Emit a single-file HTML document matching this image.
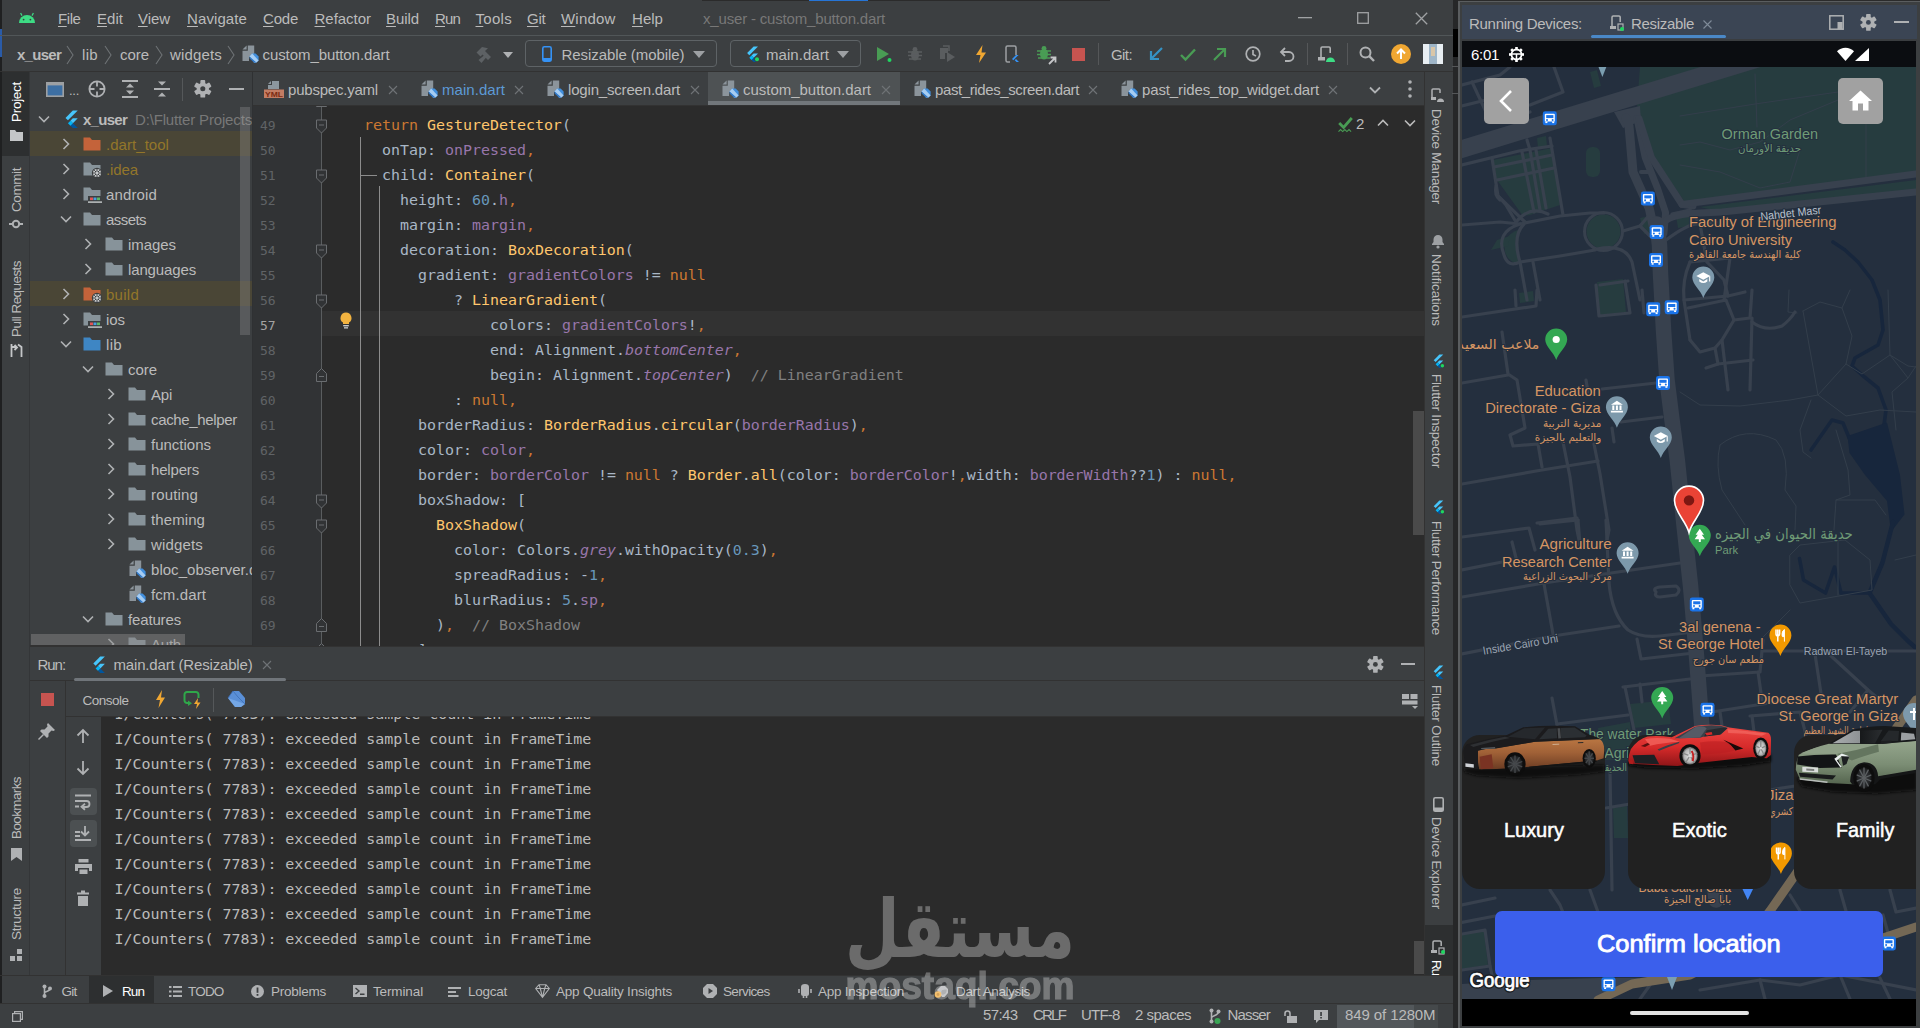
<!DOCTYPE html>
<html><head><meta charset="utf-8"><title>x_user - custom_button.dart</title>
<style>
*{box-sizing:border-box;margin:0;padding:0}
html,body{width:1920px;height:1028px;overflow:hidden;background:#3c3f41}
body{position:relative;font-family:"Liberation Sans","DejaVu Sans",sans-serif;font-size:15px;color:#bbbbbb;-webkit-font-smoothing:antialiased}
.a{position:absolute}
.t{position:absolute;white-space:nowrap;line-height:20px;height:20px}
.mono{font-family:"DejaVu Sans Mono","Liberation Mono",monospace;font-size:14.95px;white-space:pre}
.v{position:absolute;white-space:nowrap;transform-origin:0 0;line-height:16px;font-size:13.5px}
svg{position:absolute;overflow:visible}
.k{color:#cc7832}.f{color:#ffc66d}.p{color:#9876aa}.n{color:#6897bb}.c{color:#808080}.i{font-style:italic;color:#9876aa}
u{text-decoration:underline;text-underline-offset:2px;text-decoration-thickness:1px}
</style></head><body>
<div class="a" style="left:0px;top:0px;width:1920px;height:1028px;background:#3c3f41;"></div>
<div class="a" style="left:0px;top:0px;width:2px;height:1028px;background:#1f2021;"></div>
<div class="a" style="left:0px;top:29px;width:2px;height:28px;background:#2a5ba8;"></div>
<div class="a" style="left:0px;top:35px;width:1453px;height:1px;background:#515658;"></div>
<div class="a" style="left:0px;top:71px;width:1453px;height:1px;background:#323232;"></div>
<div class="a" style="left:702px;top:0px;width:408px;height:1px;background:#2b2b2b;"></div>
<div class="a" style="left:809px;top:0px;width:59px;height:1px;background:#2675d7;"></div>
<svg style="left:18.0px;top:12.0px" width="18" height="12" viewBox="0 0 18 12"><path d="M1 11 A8 8 0 0 1 17 11 Z" fill="#3ddc84"/><path d="M4 3.6 L2.6 1 M14 3.6 L15.4 1" stroke="#3ddc84" stroke-width="1.2"/><circle cx="5.6" cy="7.6" r=".9" fill="#3c3f41"/><circle cx="12.4" cy="7.6" r=".9" fill="#3c3f41"/></svg>
<span class="t" style="left:58px;top:8.7px;font-size:15px;letter-spacing:-0.418px;color:#bbbbbb;"><u>F</u>ile</span>
<span class="t" style="left:97px;top:8.7px;font-size:15px;letter-spacing:0.038px;color:#bbbbbb;"><u>E</u>dit</span>
<span class="t" style="left:138px;top:8.7px;font-size:15px;letter-spacing:-0.061px;color:#bbbbbb;"><u>V</u>iew</span>
<span class="t" style="left:187px;top:8.7px;font-size:15px;letter-spacing:0.100px;color:#bbbbbb;"><u>N</u>avigate</span>
<span class="t" style="left:263px;top:8.7px;font-size:15px;letter-spacing:-0.215px;color:#bbbbbb;"><u>C</u>ode</span>
<span class="t" style="left:314.5px;top:8.7px;font-size:15px;letter-spacing:-0.024px;color:#bbbbbb;"><u>R</u>efactor</span>
<span class="t" style="left:386px;top:8.7px;font-size:15px;letter-spacing:-0.071px;color:#bbbbbb;"><u>B</u>uild</span>
<span class="t" style="left:435px;top:8.7px;font-size:15px;letter-spacing:-0.839px;color:#bbbbbb;"><u>R</u>un</span>
<span class="t" style="left:475.5px;top:8.7px;font-size:15px;letter-spacing:0.296px;color:#bbbbbb;"><u>T</u>ools</span>
<span class="t" style="left:527px;top:8.7px;font-size:15px;letter-spacing:-0.222px;color:#bbbbbb;"><u>G</u>it</span>
<span class="t" style="left:561px;top:8.7px;font-size:15px;letter-spacing:0.192px;color:#bbbbbb;"><u>W</u>indow</span>
<span class="t" style="left:632px;top:8.7px;font-size:15px;letter-spacing:0.037px;color:#bbbbbb;"><u>H</u>elp</span>
<span class="t" style="left:703px;top:8.7px;font-size:15px;letter-spacing:-0.176px;color:#787878;">x_user - custom_button.dart</span>
<svg style="left:1298.0px;top:17.0px" width="14" height="2" viewBox="0 0 14 2"><rect width="14" height="1.3" fill="#a0a2a4"/></svg>
<svg style="left:1357.0px;top:12.0px" width="12" height="12" viewBox="0 0 12 12"><rect x=".7" y=".7" width="10.6" height="10.6" fill="none" stroke="#a0a2a4" stroke-width="1.3"/></svg>
<svg style="left:1414.5px;top:11.5px" width="13" height="13" viewBox="0 0 13 13"><path d="M.8 .8 L12.2 12.2 M12.2 .8 L.8 12.2" stroke="#a0a2a4" stroke-width="1.3"/></svg>
<span class="t" style="left:17px;top:44.7px;font-size:15px;letter-spacing:-0.728px;color:#bbbbbb;font-weight:bold;">x_user</span>
<span class="t" style="left:82px;top:44.7px;font-size:15px;letter-spacing:0.331px;color:#bbbbbb;">lib</span>
<span class="t" style="left:120px;top:44.7px;font-size:15px;letter-spacing:-0.045px;color:#bbbbbb;">core</span>
<span class="t" style="left:170px;top:44.7px;font-size:15px;letter-spacing:0.163px;color:#bbbbbb;">widgets</span>
<span class="t" style="left:262.5px;top:44.7px;font-size:15px;letter-spacing:-0.078px;color:#bbbbbb;">custom_button.dart</span>
<svg style="left:66.0px;top:44.5px" width="8" height="20" viewBox="0 0 8 20"><path d="M1 1 L7 10 L1 19" stroke="#6e7275" stroke-width="1.1" fill="none"/></svg>
<svg style="left:104.0px;top:44.5px" width="8" height="20" viewBox="0 0 8 20"><path d="M1 1 L7 10 L1 19" stroke="#6e7275" stroke-width="1.1" fill="none"/></svg>
<svg style="left:155.0px;top:44.5px" width="8" height="20" viewBox="0 0 8 20"><path d="M1 1 L7 10 L1 19" stroke="#6e7275" stroke-width="1.1" fill="none"/></svg>
<svg style="left:226.5px;top:44.5px" width="8" height="20" viewBox="0 0 8 20"><path d="M1 1 L7 10 L1 19" stroke="#6e7275" stroke-width="1.1" fill="none"/></svg>
<svg style="left:241.0px;top:45.0px" width="18" height="18" viewBox="0 0 18 18"><path d="M6.8 0.5 H13.2 V9 L8 12.5 V16 H1.5 V5.8 H6.8 Z" fill="#8b949b"/><path d="M5.6 0.5 L1.5 4.6 H5.6 Z" fill="#8b949b"/><path d="M8.6 11.4 L11.2 8.6 H14.6 L17.6 11.6 V15.4 L15.4 17.6 H13 Z" fill="#418fde"/><path d="M8.6 11.4 L11.2 8.6 L17.6 15.4 L15.4 17.6 H13 Z" fill="#a6cdf3"/><path d="M8.6 11.4 L15.4 17.6 H13 L8.6 13.6 Z" fill="#2f78c8"/></svg>
<svg style="left:474.5px;top:44.5px" width="19" height="19" viewBox="0 0 19 19"><path d="M3.5 15 L6.5 18 L11.5 12 L9.5 10 Z" fill="#5d6164"/><path d="M1.5 7.5 L7 2 L13 3.2 L10 6 L16 12 L13 15 L7.5 9.5 L5.5 11.5 Z" fill="#5d6164"/></svg>
<svg style="left:503.0px;top:52.0px" width="10" height="6" viewBox="0 0 10 6"><path d="M0 0 H10 L5 6 Z" fill="#afb1b3"/></svg>
<div class="a" style="left:525px;top:40px;width:192px;height:27px;border:1px solid #5e6366;border-radius:4px;"></div>
<svg style="left:541.5px;top:46.0px" width="10" height="16" viewBox="0 0 10 16"><rect x=".8" y=".8" width="8.4" height="14.4" rx="1.6" fill="none" stroke="#3592f5" stroke-width="1.6"/><rect x=".8" y="12" width="8.4" height="3.2" fill="#3592f5"/></svg>
<span class="t" style="left:561.5px;top:44.7px;font-size:15px;letter-spacing:-0.068px;color:#bbbbbb;">Resizable (mobile)</span>
<svg style="left:693.0px;top:50.5px" width="12" height="7" viewBox="0 0 12 7"><path d="M0 0 H12 L6 7 Z" fill="#9da0a3"/></svg>
<div class="a" style="left:730px;top:40px;width:131px;height:27px;border:1px solid #5e6366;border-radius:4px;"></div>
<svg style="left:744.0px;top:46.0px" width="16" height="16" viewBox="0 0 16 16"><path d="M9.6 0.5 H14 L5.3 9.2 L3.1 7 Z" fill="#47c5fb"/><path d="M9.6 7.4 H14 L9.7 11.7 L7.5 9.5 Z" fill="#47c5fb"/><path d="M7.5 13.9 L9.6 16 H14 L9.7 11.7 Z" fill="#00569e"/><path d="M5.3 11.7 L7.5 9.5 L9.7 11.7 L7.5 13.9 Z" fill="#00b5f8"/><circle cx="13" cy="13.3" r="2.6" fill="#3c3f41"/><circle cx="13" cy="13.3" r="2" fill="#1fd660"/></svg>
<span class="t" style="left:766px;top:44.7px;font-size:15px;letter-spacing:0.052px;color:#bbbbbb;">main.dart</span>
<svg style="left:837.0px;top:50.5px" width="12" height="7" viewBox="0 0 12 7"><path d="M0 0 H12 L6 7 Z" fill="#9da0a3"/></svg>
<svg style="left:876.0px;top:46.0px" width="16" height="16" viewBox="0 0 16 16"><path d="M1 1 L13 8 L1 15 Z" fill="#499c54"/><circle cx="13.5" cy="14" r="2" fill="#1fd660"/></svg>
<svg style="left:907.0px;top:46.0px" width="16" height="16" viewBox="0 0 16 16"><ellipse cx="8" cy="9" rx="4" ry="5.5" fill="#5a5d5f"/><circle cx="8" cy="3.3" r="2.4" fill="#5a5d5f"/><path d="M1 6 H15 M1 9.5 H15 M2 13 H14" stroke="#5a5d5f" stroke-width="1.4"/></svg>
<svg style="left:939.0px;top:46.0px" width="18" height="16" viewBox="0 0 18 16"><path d="M1 2 H9 V7 L6 7 V13 H1 Z" fill="#5a5d5f"/><path d="M8 6 L16 11 L8 16 Z" fill="#5a5d5f"/><path d="M4 0 H10 V5" fill="none" stroke="#5a5d5f" stroke-width="1.5"/></svg>
<svg style="left:975.0px;top:45.0px" width="12" height="18" viewBox="0 0 12 18"><path d="M7.5 0 L1 10 H5.5 L4 18 L11 7.5 H6.5 Z" fill="#f0a732"/></svg>
<svg style="left:1003.5px;top:45.0px" width="16" height="18" viewBox="0 0 16 18"><path d="M12 10 V2.5 A1.5 1.5 0 0 0 10.5 1 H3.5 A1.5 1.5 0 0 0 2 2.5 V15.5 A1.5 1.5 0 0 0 3.5 17 H6" fill="none" stroke="#9da0a3" stroke-width="1.5"/><path d="M12 10 L8 14 L9.3 15.3 L14.6 10 Z M12 14 L10.7 15.3 L12.5 17.1 H15 Z" fill="#3592f5"/></svg>
<svg style="left:1036.0px;top:45.0px" width="16" height="16" viewBox="0 0 16 16"><ellipse cx="8" cy="9" rx="4" ry="5.5" fill="#499c54"/><circle cx="8" cy="3.3" r="2.4" fill="#499c54"/><path d="M1 6 H15 M1 9.5 H15 M2 13 H14" stroke="#499c54" stroke-width="1.4"/></svg>
<svg style="left:1047.5px;top:55.5px" width="9" height="9" viewBox="0 0 9 9"><path d="M1 8 L7 2 M2.5 1.5 H7.5 V6.5" stroke="#c4c6c8" stroke-width="1.8" fill="none"/></svg>
<div class="a" style="left:1071.5px;top:47.5px;width:13px;height:13px;background:#c75450;"></div>
<div class="a" style="left:1098px;top:43px;width:1px;height:22px;background:#555759;"></div>
<span class="t" style="left:1111px;top:44.7px;font-size:15px;letter-spacing:-0.584px;color:#bbbbbb;">Git:</span>
<svg style="left:1148.5px;top:47.0px" width="14" height="14" viewBox="0 0 14 14"><path d="M13 1 L2 12 M2 4 V12 H10" stroke="#3592c4" stroke-width="2.2" fill="none"/></svg>
<svg style="left:1180.0px;top:47.5px" width="16" height="13" viewBox="0 0 16 13"><path d="M1 7 L5.5 11.5 L15 1.5" stroke="#499c54" stroke-width="2.4" fill="none"/></svg>
<svg style="left:1213.0px;top:47.0px" width="14" height="14" viewBox="0 0 14 14"><path d="M1 13 L12 2 M4 2 H12 V10" stroke="#499c54" stroke-width="2.2" fill="none"/></svg>
<svg style="left:1245.0px;top:46.0px" width="16" height="16" viewBox="0 0 16 16"><circle cx="8" cy="8" r="6.8" fill="none" stroke="#afb1b3" stroke-width="1.7"/><path d="M8 4 V8.5 L11 10" stroke="#afb1b3" stroke-width="1.7" fill="none"/></svg>
<svg style="left:1278.5px;top:46.5px" width="16" height="15" viewBox="0 0 16 15"><path d="M2 5 H10 A4.5 4.5 0 0 1 10 14 H6" stroke="#afb1b3" stroke-width="1.8" fill="none"/><path d="M6 1 L2 5 L6 9" stroke="#afb1b3" stroke-width="1.8" fill="none"/></svg>
<div class="a" style="left:1307px;top:43px;width:1px;height:22px;background:#555759;"></div>
<svg style="left:1318.0px;top:46.0px" width="18" height="16" viewBox="0 0 18 16"><path d="M3 11 V2.2 A1.2 1.2 0 0 1 4.2 1 H11 A1.2 1.2 0 0 1 12.2 2.2 V7" fill="none" stroke="#afb1b3" stroke-width="1.6"/><rect x="0" y="11" width="7" height="3.5" fill="#afb1b3"/><path d="M8 16 A4.5 4.5 0 0 1 17 16 Z" fill="#3ddc84"/></svg>
<div class="a" style="left:1347px;top:43px;width:1px;height:22px;background:#555759;"></div>
<svg style="left:1359.0px;top:46.0px" width="16" height="16" viewBox="0 0 16 16"><circle cx="6.5" cy="6.5" r="5" fill="none" stroke="#afb1b3" stroke-width="2"/><path d="M10.2 10.2 L15 15" stroke="#afb1b3" stroke-width="2.4"/></svg>
<svg style="left:1391.0px;top:44.0px" width="20" height="20" viewBox="0 0 20 20"><circle cx="10" cy="10" r="10" fill="#f0a732"/><path d="M10 15 V6 M6 9.5 L10 5.5 L14 9.5" stroke="#fff" stroke-width="2" fill="none"/></svg>
<div class="a" style="left:1423px;top:44px;width:20px;height:20px;background:#e8eef2;"></div>
<div class="a" style="left:1429px;top:44px;width:8px;height:20px;background:#9fb6c8;"></div>
<div class="a" style="left:1431px;top:47px;width:4px;height:9px;background:#d9c6a8;"></div>
<div class="a" style="left:2px;top:72px;width:27px;height:931px;background:#3c3f41;"></div>
<div class="a" style="left:2px;top:72px;width:27px;height:84px;background:#2d2f30;"></div>
<div class="a" style="left:29px;top:72px;width:1px;height:931px;background:#343638;"></div>
<span class="v" style="left:9px;top:122.0px;transform:rotate(-90deg);font-size:13.5px;letter-spacing:-0.288px;color:#ffffff">Project</span>
<svg style="left:9.5px;top:129.5px" width="13" height="11" viewBox="0 0 13 11"><path d="M0 0 H5 L6.5 2 H13 V11 H0 Z" fill="#c4c6c8"/></svg>
<span class="v" style="left:9px;top:212.0px;transform:rotate(-90deg);font-size:13.5px;letter-spacing:-0.417px;color:#bbbbbb">Commit</span>
<svg style="left:9.0px;top:219.0px" width="14" height="10" viewBox="0 0 14 10"><circle cx="7" cy="5" r="3.2" fill="none" stroke="#afb1b3" stroke-width="2"/><path d="M0 5 H3.5 M10.5 5 H14" stroke="#afb1b3" stroke-width="2"/></svg>
<span class="v" style="left:9px;top:337.0px;transform:rotate(-90deg);font-size:13.5px;letter-spacing:-0.561px;color:#bbbbbb">Pull Requests</span>
<svg style="left:9.5px;top:343.5px" width="13" height="13" viewBox="0 0 13 13"><path d="M1.5 0 V13 M1.5 3 L6.5 3 M4.5 1 L7 3.5 L4.5 6 M11.5 13 V3 L8 0.5" stroke="#c4c6c8" stroke-width="1.8" fill="none"/></svg>
<span class="v" style="left:9px;top:839.0px;transform:rotate(-90deg);font-size:13.5px;letter-spacing:-0.614px;color:#bbbbbb">Bookmarks</span>
<svg style="left:10.5px;top:847.5px" width="11" height="13" viewBox="0 0 11 13"><path d="M0 0 H11 V13 L5.5 9 L0 13 Z" fill="#afb1b3"/></svg>
<span class="v" style="left:9px;top:940.0px;transform:rotate(-90deg);font-size:13.5px;letter-spacing:-0.308px;color:#bbbbbb">Structure</span>
<svg style="left:9.5px;top:949.0px" width="13" height="12" viewBox="0 0 13 12"><rect x="7" y="0" width="5" height="5" fill="#afb1b3"/><rect x="0" y="7" width="5" height="5" fill="#afb1b3"/><rect x="7" y="7" width="5" height="5" fill="#afb1b3"/></svg>
<div class="a" style="left:1424px;top:72px;width:1px;height:931px;background:#323232;"></div>
<div class="a" style="left:1425px;top:72px;width:28px;height:931px;background:#3c3f41;"></div>
<svg style="left:1430.5px;top:88.0px" width="13" height="14" viewBox="0 0 13 14"><path d="M1 9 V2 A1 1 0 0 1 2 1 H8 A1 1 0 0 1 9 2 V5" fill="none" stroke="#afb1b3" stroke-width="1.5"/><rect x="0" y="9" width="5" height="3" fill="#afb1b3"/><path d="M6 14 A3.5 3.5 0 0 1 13 14 Z" fill="#afb1b3"/></svg>
<span class="v" style="left:1444px;top:109px;transform:rotate(90deg);font-size:13.5px;letter-spacing:-0.236px;color:#bbbbbb">Device Manager</span>
<svg style="left:1431.0px;top:233.5px" width="14" height="15" viewBox="0 0 14 15"><path d="M1 11 H13 V10 L11.5 8 V5.5 A4.5 4.5 0 0 0 2.5 5.5 V8 L1 10 Z" fill="#9da0a3"/><circle cx="7" cy="13" r="1.6" fill="#9da0a3"/></svg>
<span class="v" style="left:1444px;top:254px;transform:rotate(90deg);font-size:13.5px;letter-spacing:-0.118px;color:#bbbbbb">Notifications</span>
<svg style="left:1431.0px;top:354.0px" width="14" height="14" viewBox="0 0 16 16"><path d="M9.6 0.5 H14 L5.3 9.2 L3.1 7 Z" fill="#47c5fb"/><path d="M9.6 7.4 H14 L9.7 11.7 L7.5 9.5 Z" fill="#47c5fb"/><path d="M7.5 13.9 L9.6 16 H14 L9.7 11.7 Z" fill="#00569e"/><path d="M5.3 11.7 L7.5 9.5 L9.7 11.7 L7.5 13.9 Z" fill="#00b5f8"/><circle cx="13" cy="13.3" r="2.6" fill="#3c3f41"/><circle cx="13" cy="13.3" r="2" fill="#1fd660"/></svg>
<span class="v" style="left:1444px;top:374px;transform:rotate(90deg);font-size:13.5px;letter-spacing:-0.208px;color:#bbbbbb">Flutter Inspector</span>
<svg style="left:1431.0px;top:500.0px" width="14" height="14" viewBox="0 0 16 16"><path d="M9.6 0.5 H14 L5.3 9.2 L3.1 7 Z" fill="#47c5fb"/><path d="M9.6 7.4 H14 L9.7 11.7 L7.5 9.5 Z" fill="#47c5fb"/><path d="M7.5 13.9 L9.6 16 H14 L9.7 11.7 Z" fill="#00569e"/><path d="M5.3 11.7 L7.5 9.5 L9.7 11.7 L7.5 13.9 Z" fill="#00b5f8"/><circle cx="13" cy="13.3" r="2.6" fill="#3c3f41"/><circle cx="13" cy="13.3" r="2" fill="#1fd660"/></svg>
<span class="v" style="left:1444px;top:521px;transform:rotate(90deg);font-size:13.5px;letter-spacing:-0.279px;color:#bbbbbb">Flutter Performance</span>
<svg style="left:1431.0px;top:665.0px" width="14" height="14" viewBox="0 0 16 16"><path d="M9.6 0.5 H14 L5.3 9.2 L3.1 7 Z" fill="#47c5fb"/><path d="M9.6 7.4 H14 L9.7 11.7 L7.5 9.5 Z" fill="#47c5fb"/><path d="M7.5 13.9 L9.6 16 H14 L9.7 11.7 Z" fill="#00569e"/><path d="M5.3 11.7 L7.5 9.5 L9.7 11.7 L7.5 13.9 Z" fill="#00b5f8"/></svg>
<span class="v" style="left:1444px;top:685px;transform:rotate(90deg);font-size:13.5px;letter-spacing:-0.252px;color:#bbbbbb">Flutter Outline</span>
<svg style="left:1432.5px;top:796.5px" width="11" height="15" viewBox="0 0 11 15"><rect x=".8" y=".8" width="9.4" height="13.4" rx="1.5" fill="none" stroke="#afb1b3" stroke-width="1.6"/><rect x=".8" y="10.5" width="9.4" height="3.5" fill="#afb1b3"/></svg>
<span class="v" style="left:1444px;top:817px;transform:rotate(90deg);font-size:13.5px;letter-spacing:-0.219px;color:#bbbbbb">Device Explorer</span>
<div class="a" style="left:1425px;top:925px;width:28px;height:50px;background:#2d2f30;"></div>
<svg style="left:1431.0px;top:940.0px" width="14" height="14" viewBox="0 0 14 14"><path d="M2 10 V2.2 A1.2 1.2 0 0 1 3.2 1 H9 A1.2 1.2 0 0 1 10.2 2.2 V6" fill="none" stroke="#afb1b3" stroke-width="1.5"/><rect x="0" y="10" width="6" height="3" fill="#afb1b3"/><rect x="8" y="8" width="5" height="6" fill="none" stroke="#afb1b3" stroke-width="1.2"/><circle cx="12" cy="12" r="2" fill="#1fd660"/></svg>
<span class="v" style="left:1444px;top:960px;transform:rotate(90deg);font-size:13.5px;letter-spacing:-1.255px;color:#ffffff">Run</span>
<div class="a" style="left:1453px;top:0px;width:5px;height:1028px;background:#262728;"></div>
<div class="a" style="left:1453px;top:29px;width:5px;height:27.5px;background:#000000;"></div>
<div class="a" style="left:1452px;top:66px;width:6px;height:1px;background:#555759;"></div>
<div class="a" style="left:1452px;top:93px;width:6px;height:1px;background:#555759;"></div>
<div class="a" style="left:30px;top:72px;width:222px;height:574px;background:#3c3f41;"></div>
<div class="a" style="left:252px;top:72px;width:1px;height:574px;background:#2f3133;"></div>
<svg style="left:46.0px;top:81.5px" width="18" height="15" viewBox="0 0 18 15"><rect x=".8" y=".8" width="16.4" height="13.4" fill="#3d6fa3" stroke="#9da0a3" stroke-width="1.6"/><rect x="0" y="0" width="18" height="3.4" fill="#9da0a3"/></svg>
<span class="t" style="left:69px;top:81.0px;font-size:13px;letter-spacing:-0.278px;color:#bbbbbb;">...</span>
<svg style="left:88.0px;top:80.0px" width="18" height="18" viewBox="0 0 18 18"><circle cx="9" cy="9" r="7.6" fill="none" stroke="#afb1b3" stroke-width="1.8"/><path d="M9 1 V6.5 M9 11.5 V17 M1 9 H6.5 M11.5 9 H17" stroke="#afb1b3" stroke-width="1.8"/></svg>
<svg style="left:122.0px;top:80.0px" width="16" height="18" viewBox="0 0 16 18"><path d="M0 1 H16 M0 17 H16" stroke="#afb1b3" stroke-width="2"/><path d="M4 7.5 L8 3.5 L12 7.5 Z M4 10.5 L8 14.5 L12 10.5 Z" fill="#afb1b3"/></svg>
<svg style="left:154.0px;top:80.0px" width="16" height="18" viewBox="0 0 16 18"><path d="M0 9 H16" stroke="#afb1b3" stroke-width="2"/><path d="M4 1.5 L8 5.5 L12 1.5 Z M4 16.5 L8 12.5 L12 16.5 Z" fill="#afb1b3"/></svg>
<div class="a" style="left:182px;top:78px;width:1px;height:23px;background:#55585a;"></div>
<svg style="left:194.2px;top:80.2px" width="17.6" height="17.6" viewBox="0 0 16 16"><g transform="translate(8 8)"><rect x="-2.2" y="-8" width="4.4" height="5" rx="0.8" transform="rotate(0)" fill="#afb1b3"/><rect x="-2.2" y="-8" width="4.4" height="5" rx="0.8" transform="rotate(60)" fill="#afb1b3"/><rect x="-2.2" y="-8" width="4.4" height="5" rx="0.8" transform="rotate(120)" fill="#afb1b3"/><rect x="-2.2" y="-8" width="4.4" height="5" rx="0.8" transform="rotate(180)" fill="#afb1b3"/><rect x="-2.2" y="-8" width="4.4" height="5" rx="0.8" transform="rotate(240)" fill="#afb1b3"/><rect x="-2.2" y="-8" width="4.4" height="5" rx="0.8" transform="rotate(300)" fill="#afb1b3"/><circle r="5.6" fill="#afb1b3"/><circle r="2.3" fill="#3c3f41"/></g></svg>
<svg style="left:228.5px;top:88.0px" width="15" height="2" viewBox="0 0 15 2"><rect width="15" height="2" fill="#afb1b3"/></svg>
<div class="a" style="left:30px;top:106px;width:222px;height:540px;overflow:hidden">
<svg style="left:8.0px;top:9.0px" width="12" height="8" viewBox="0 0 12 8"><path d="M1 1.5 L6 6.5 L11 1.5" stroke="#afb1b3" stroke-width="1.6" fill="none"/></svg>
<svg style="left:32.0px;top:4.0px" width="18" height="18" viewBox="0 0 16 16"><path d="M9.6 0.5 H14 L5.3 9.2 L3.1 7 Z" fill="#47c5fb"/><path d="M9.6 7.4 H14 L9.7 11.7 L7.5 9.5 Z" fill="#47c5fb"/><path d="M7.5 13.9 L9.6 16 H14 L9.7 11.7 Z" fill="#00569e"/><path d="M5.3 11.7 L7.5 9.5 L9.7 11.7 L7.5 13.9 Z" fill="#00b5f8"/></svg>
<span class="t" style="left:53px;top:3.7px;font-size:15px;letter-spacing:-0.728px;color:#bbbbbb;font-weight:bold;">x_user</span>
<span class="t" style="left:105px;top:3.7px;font-size:15px;letter-spacing:-0.160px;color:#787878;">D:\Flutter Projects</span>
<div class="a" style="left:0px;top:25px;width:222px;height:25px;background:#4a4636;"></div>
<svg style="left:32.0px;top:32.0px" width="8" height="12" viewBox="0 0 8 12"><path d="M1.5 1 L6.5 6 L1.5 11" stroke="#afb1b3" stroke-width="1.6" fill="none"/></svg>
<svg style="left:53.0px;top:30.0px" width="18" height="16" viewBox="0 0 18 16"><path d="M0.5 1.5 H7 L9 4 H17.5 V14.5 H0.5 Z" fill="#c4633a"/></svg>
<span class="t" style="left:76px;top:28.7px;font-size:15px;letter-spacing:0.046px;color:#93762a;">.dart_tool</span>
<svg style="left:32.0px;top:57.0px" width="8" height="12" viewBox="0 0 8 12"><path d="M1.5 1 L6.5 6 L1.5 11" stroke="#afb1b3" stroke-width="1.6" fill="none"/></svg>
<svg style="left:53.0px;top:55.0px" width="18" height="16" viewBox="0 0 18 16"><path d="M0.5 1.5 H7 L9 4 H17.5 V14.5 H0.5 Z" fill="#87939a"/></svg>
<svg style="left:62.0px;top:62.0px" width="10" height="10" viewBox="0 0 10 10"><circle cx="5" cy="5" r="5.2" fill="#3c3f41"/><circle cx="5" cy="5" r="4" fill="#c9ccce"/><path d="M5 1 V9 M1 5 H9 M2.2 2.2 L7.8 7.8 M7.8 2.2 L2.2 7.8" stroke="#3c3f41" stroke-width="1"/><circle cx="5" cy="5" r="1.2" fill="#c9ccce"/></svg>
<span class="t" style="left:76px;top:53.7px;font-size:15px;letter-spacing:-0.106px;color:#93762a;">.idea</span>
<svg style="left:32.0px;top:82.0px" width="8" height="12" viewBox="0 0 8 12"><path d="M1.5 1 L6.5 6 L1.5 11" stroke="#afb1b3" stroke-width="1.6" fill="none"/></svg>
<svg style="left:53.0px;top:80.0px" width="18" height="16" viewBox="0 0 18 16"><path d="M0.5 1.5 H7 L9 4 H17.5 V14.5 H0.5 Z" fill="#87939a"/></svg>
<svg style="left:58.0px;top:89.5px" width="14" height="7" viewBox="0 0 14 7"><rect x="0" y="0" width="14" height="7" fill="#3c3f41"/><rect x="2" y="1.5" width="3" height="2.6" fill="#e05555"/><rect x="5.5" y="1.5" width="3" height="2.6" fill="#4a9fe0"/><rect x="9" y="1.5" width="3" height="2.6" fill="#5ab869"/><rect x="0" y="5.4" width="14" height="1.4" fill="#c9ccce"/></svg>
<span class="t" style="left:76px;top:78.7px;font-size:15px;letter-spacing:0.137px;color:#bbbbbb;">android</span>
<svg style="left:30.0px;top:109.0px" width="12" height="8" viewBox="0 0 12 8"><path d="M1 1.5 L6 6.5 L11 1.5" stroke="#afb1b3" stroke-width="1.6" fill="none"/></svg>
<svg style="left:53.0px;top:105.0px" width="18" height="16" viewBox="0 0 18 16"><path d="M0.5 1.5 H7 L9 4 H17.5 V14.5 H0.5 Z" fill="#87939a"/></svg>
<span class="t" style="left:76px;top:103.7px;font-size:15px;letter-spacing:-0.559px;color:#bbbbbb;">assets</span>
<svg style="left:54.0px;top:132.0px" width="8" height="12" viewBox="0 0 8 12"><path d="M1.5 1 L6.5 6 L1.5 11" stroke="#afb1b3" stroke-width="1.6" fill="none"/></svg>
<svg style="left:75.0px;top:130.0px" width="18" height="16" viewBox="0 0 18 16"><path d="M0.5 1.5 H7 L9 4 H17.5 V14.5 H0.5 Z" fill="#87939a"/></svg>
<span class="t" style="left:98px;top:128.7px;font-size:15px;letter-spacing:-0.059px;color:#bbbbbb;">images</span>
<svg style="left:54.0px;top:157.0px" width="8" height="12" viewBox="0 0 8 12"><path d="M1.5 1 L6.5 6 L1.5 11" stroke="#afb1b3" stroke-width="1.6" fill="none"/></svg>
<svg style="left:75.0px;top:155.0px" width="18" height="16" viewBox="0 0 18 16"><path d="M0.5 1.5 H7 L9 4 H17.5 V14.5 H0.5 Z" fill="#87939a"/></svg>
<span class="t" style="left:98px;top:153.7px;font-size:15px;letter-spacing:-0.137px;color:#bbbbbb;">languages</span>
<div class="a" style="left:0px;top:175px;width:222px;height:25px;background:#4a4636;"></div>
<svg style="left:32.0px;top:182.0px" width="8" height="12" viewBox="0 0 8 12"><path d="M1.5 1 L6.5 6 L1.5 11" stroke="#afb1b3" stroke-width="1.6" fill="none"/></svg>
<svg style="left:53.0px;top:180.0px" width="18" height="16" viewBox="0 0 18 16"><path d="M0.5 1.5 H7 L9 4 H17.5 V14.5 H0.5 Z" fill="#c4633a"/></svg>
<svg style="left:62.0px;top:187.0px" width="10" height="10" viewBox="0 0 10 10"><circle cx="5" cy="5" r="5.2" fill="#3c3f41"/><circle cx="5" cy="5" r="4" fill="#c9ccce"/><path d="M5 1 V9 M1 5 H9 M2.2 2.2 L7.8 7.8 M7.8 2.2 L2.2 7.8" stroke="#3c3f41" stroke-width="1"/><circle cx="5" cy="5" r="1.2" fill="#c9ccce"/></svg>
<span class="t" style="left:76px;top:178.7px;font-size:15px;letter-spacing:0.261px;color:#93762a;">build</span>
<svg style="left:32.0px;top:207.0px" width="8" height="12" viewBox="0 0 8 12"><path d="M1.5 1 L6.5 6 L1.5 11" stroke="#afb1b3" stroke-width="1.6" fill="none"/></svg>
<svg style="left:53.0px;top:205.0px" width="18" height="16" viewBox="0 0 18 16"><path d="M0.5 1.5 H7 L9 4 H17.5 V14.5 H0.5 Z" fill="#87939a"/></svg>
<svg style="left:58.0px;top:214.5px" width="14" height="7" viewBox="0 0 14 7"><rect x="0" y="0" width="14" height="7" fill="#3c3f41"/><rect x="2" y="1.5" width="3" height="2.6" fill="#e05555"/><rect x="5.5" y="1.5" width="3" height="2.6" fill="#4a9fe0"/><rect x="9" y="1.5" width="3" height="2.6" fill="#5ab869"/><rect x="0" y="5.4" width="14" height="1.4" fill="#c9ccce"/></svg>
<span class="t" style="left:76px;top:203.7px;font-size:15px;letter-spacing:-0.058px;color:#bbbbbb;">ios</span>
<svg style="left:30.0px;top:234.0px" width="12" height="8" viewBox="0 0 12 8"><path d="M1 1.5 L6 6.5 L11 1.5" stroke="#afb1b3" stroke-width="1.6" fill="none"/></svg>
<svg style="left:53.0px;top:230.0px" width="18" height="16" viewBox="0 0 18 16"><path d="M0.5 1.5 H7 L9 4 H17.5 V14.5 H0.5 Z" fill="#3e86c4"/></svg>
<span class="t" style="left:76px;top:228.7px;font-size:15px;letter-spacing:0.331px;color:#bbbbbb;">lib</span>
<svg style="left:52.0px;top:259.0px" width="12" height="8" viewBox="0 0 12 8"><path d="M1 1.5 L6 6.5 L11 1.5" stroke="#afb1b3" stroke-width="1.6" fill="none"/></svg>
<svg style="left:75.0px;top:255.0px" width="18" height="16" viewBox="0 0 18 16"><path d="M0.5 1.5 H7 L9 4 H17.5 V14.5 H0.5 Z" fill="#87939a"/></svg>
<span class="t" style="left:98px;top:253.7px;font-size:15px;letter-spacing:-0.045px;color:#bbbbbb;">core</span>
<svg style="left:77.0px;top:282.0px" width="8" height="12" viewBox="0 0 8 12"><path d="M1.5 1 L6.5 6 L1.5 11" stroke="#afb1b3" stroke-width="1.6" fill="none"/></svg>
<svg style="left:98.0px;top:280.0px" width="18" height="16" viewBox="0 0 18 16"><path d="M0.5 1.5 H7 L9 4 H17.5 V14.5 H0.5 Z" fill="#87939a"/></svg>
<span class="t" style="left:121px;top:278.7px;font-size:15px;letter-spacing:-0.227px;color:#bbbbbb;">Api</span>
<svg style="left:77.0px;top:307.0px" width="8" height="12" viewBox="0 0 8 12"><path d="M1.5 1 L6.5 6 L1.5 11" stroke="#afb1b3" stroke-width="1.6" fill="none"/></svg>
<svg style="left:98.0px;top:305.0px" width="18" height="16" viewBox="0 0 18 16"><path d="M0.5 1.5 H7 L9 4 H17.5 V14.5 H0.5 Z" fill="#87939a"/></svg>
<span class="t" style="left:121px;top:303.7px;font-size:15px;letter-spacing:-0.339px;color:#bbbbbb;">cache_helper</span>
<svg style="left:77.0px;top:332.0px" width="8" height="12" viewBox="0 0 8 12"><path d="M1.5 1 L6.5 6 L1.5 11" stroke="#afb1b3" stroke-width="1.6" fill="none"/></svg>
<svg style="left:98.0px;top:330.0px" width="18" height="16" viewBox="0 0 18 16"><path d="M0.5 1.5 H7 L9 4 H17.5 V14.5 H0.5 Z" fill="#87939a"/></svg>
<span class="t" style="left:121px;top:328.7px;font-size:15px;letter-spacing:-0.004px;color:#bbbbbb;">functions</span>
<svg style="left:77.0px;top:357.0px" width="8" height="12" viewBox="0 0 8 12"><path d="M1.5 1 L6.5 6 L1.5 11" stroke="#afb1b3" stroke-width="1.6" fill="none"/></svg>
<svg style="left:98.0px;top:355.0px" width="18" height="16" viewBox="0 0 18 16"><path d="M0.5 1.5 H7 L9 4 H17.5 V14.5 H0.5 Z" fill="#87939a"/></svg>
<span class="t" style="left:121px;top:353.7px;font-size:15px;letter-spacing:-0.171px;color:#bbbbbb;">helpers</span>
<svg style="left:77.0px;top:382.0px" width="8" height="12" viewBox="0 0 8 12"><path d="M1.5 1 L6.5 6 L1.5 11" stroke="#afb1b3" stroke-width="1.6" fill="none"/></svg>
<svg style="left:98.0px;top:380.0px" width="18" height="16" viewBox="0 0 18 16"><path d="M0.5 1.5 H7 L9 4 H17.5 V14.5 H0.5 Z" fill="#87939a"/></svg>
<span class="t" style="left:121px;top:378.7px;font-size:15px;letter-spacing:0.162px;color:#bbbbbb;">routing</span>
<svg style="left:77.0px;top:407.0px" width="8" height="12" viewBox="0 0 8 12"><path d="M1.5 1 L6.5 6 L1.5 11" stroke="#afb1b3" stroke-width="1.6" fill="none"/></svg>
<svg style="left:98.0px;top:405.0px" width="18" height="16" viewBox="0 0 18 16"><path d="M0.5 1.5 H7 L9 4 H17.5 V14.5 H0.5 Z" fill="#87939a"/></svg>
<span class="t" style="left:121px;top:403.7px;font-size:15px;letter-spacing:0.091px;color:#bbbbbb;">theming</span>
<svg style="left:77.0px;top:432.0px" width="8" height="12" viewBox="0 0 8 12"><path d="M1.5 1 L6.5 6 L1.5 11" stroke="#afb1b3" stroke-width="1.6" fill="none"/></svg>
<svg style="left:98.0px;top:430.0px" width="18" height="16" viewBox="0 0 18 16"><path d="M0.5 1.5 H7 L9 4 H17.5 V14.5 H0.5 Z" fill="#87939a"/></svg>
<span class="t" style="left:121px;top:428.7px;font-size:15px;letter-spacing:0.163px;color:#bbbbbb;">widgets</span>
<svg style="left:98.0px;top:454.0px" width="18" height="18" viewBox="0 0 18 18"><path d="M6.8 0.5 H13.2 V9 L8 12.5 V16 H1.5 V5.8 H6.8 Z" fill="#8b949b"/><path d="M5.6 0.5 L1.5 4.6 H5.6 Z" fill="#8b949b"/><path d="M8.6 11.4 L11.2 8.6 H14.6 L17.6 11.6 V15.4 L15.4 17.6 H13 Z" fill="#418fde"/><path d="M8.6 11.4 L11.2 8.6 L17.6 15.4 L15.4 17.6 H13 Z" fill="#a6cdf3"/><path d="M8.6 11.4 L15.4 17.6 H13 L8.6 13.6 Z" fill="#2f78c8"/></svg>
<span class="t" style="left:121px;top:453.7px;font-size:15px;letter-spacing:0.033px;color:#bbbbbb;">bloc_observer.dart</span>
<svg style="left:98.0px;top:479.0px" width="18" height="18" viewBox="0 0 18 18"><path d="M6.8 0.5 H13.2 V9 L8 12.5 V16 H1.5 V5.8 H6.8 Z" fill="#8b949b"/><path d="M5.6 0.5 L1.5 4.6 H5.6 Z" fill="#8b949b"/><path d="M8.6 11.4 L11.2 8.6 H14.6 L17.6 11.6 V15.4 L15.4 17.6 H13 Z" fill="#418fde"/><path d="M8.6 11.4 L11.2 8.6 L17.6 15.4 L15.4 17.6 H13 Z" fill="#a6cdf3"/><path d="M8.6 11.4 L15.4 17.6 H13 L8.6 13.6 Z" fill="#2f78c8"/></svg>
<span class="t" style="left:121px;top:478.7px;font-size:15px;letter-spacing:0.103px;color:#bbbbbb;">fcm.dart</span>
<svg style="left:52.0px;top:509.0px" width="12" height="8" viewBox="0 0 12 8"><path d="M1 1.5 L6 6.5 L11 1.5" stroke="#afb1b3" stroke-width="1.6" fill="none"/></svg>
<svg style="left:75.0px;top:505.0px" width="18" height="16" viewBox="0 0 18 16"><path d="M0.5 1.5 H7 L9 4 H17.5 V14.5 H0.5 Z" fill="#87939a"/></svg>
<span class="t" style="left:98px;top:503.7px;font-size:15px;letter-spacing:-0.150px;color:#bbbbbb;">features</span>
<svg style="left:77.0px;top:532.0px" width="8" height="12" viewBox="0 0 8 12"><path d="M1.5 1 L6.5 6 L1.5 11" stroke="#afb1b3" stroke-width="1.6" fill="none"/></svg>
<svg style="left:98.0px;top:530.0px" width="18" height="16" viewBox="0 0 18 16"><path d="M0.5 1.5 H7 L9 4 H17.5 V14.5 H0.5 Z" fill="#87939a"/></svg>
<span class="t" style="left:121px;top:528.7px;font-size:15px;letter-spacing:-0.214px;color:#bbbbbb;">Auth</span>
<div class="a" style="left:210px;top:1px;width:10px;height:228px;background:rgba(170,170,170,0.26);"></div>
<div class="a" style="left:1px;top:528px;width:154px;height:12px;background:rgba(140,140,140,0.45);"></div>
</div>
<div class="a" style="left:30px;top:645px;width:222px;height:1px;background:#323232;"></div>
<div class="a" style="left:253px;top:72px;width:1171px;height:33px;background:#3c3f41;"></div>
<div class="a" style="left:253px;top:105px;width:1171px;height:1px;background:#323232;"></div>
<div class="a" style="left:708px;top:72px;width:192px;height:33px;background:#4e5254;"></div>
<div class="a" style="left:708px;top:101px;width:192px;height:4px;background:#72777b;"></div>
<svg style="left:263.5px;top:79.0px" width="20" height="20" viewBox="0 0 20 20"><path d="M8 2 H15 V10 H4 V6 H8 Z" fill="#9aa7b0" opacity=".85"/><path d="M7 2 L4 5 H7 Z" fill="#9aa7b0" opacity=".85"/><rect x="0" y="10.5" width="20" height="8.5" fill="#d9876a" opacity=".85"/><text x="10" y="17.6" font-family="Liberation Sans,sans-serif" font-size="7.5" font-weight="bold" text-anchor="middle" fill="#7a2b12" textLength="18" lengthAdjust="spacingAndGlyphs">YML</text></svg>
<span class="t" style="left:288px;top:80.0px;font-size:15px;letter-spacing:-0.213px;color:#bbbbbb;">pubspec.yaml</span>
<svg style="left:388.0px;top:85.0px" width="10" height="10" viewBox="0 0 10 10"><path d="M1 1 L9 9 M9 1 L1 9" stroke="#6f7376" stroke-width="1.1" fill="none"/></svg>
<svg style="left:419.5px;top:80.0px" width="18" height="18" viewBox="0 0 18 18"><path d="M6.8 0.5 H13.2 V9 L8 12.5 V16 H1.5 V5.8 H6.8 Z" fill="#8b949b"/><path d="M5.6 0.5 L1.5 4.6 H5.6 Z" fill="#8b949b"/><path d="M8.6 11.4 L11.2 8.6 H14.6 L17.6 11.6 V15.4 L15.4 17.6 H13 Z" fill="#418fde"/><path d="M8.6 11.4 L11.2 8.6 L17.6 15.4 L15.4 17.6 H13 Z" fill="#a6cdf3"/><path d="M8.6 11.4 L15.4 17.6 H13 L8.6 13.6 Z" fill="#2f78c8"/></svg>
<span class="t" style="left:442px;top:80.0px;font-size:15px;letter-spacing:0.052px;color:#5c9ad6;">main.dart</span>
<svg style="left:514.0px;top:85.0px" width="10" height="10" viewBox="0 0 10 10"><path d="M1 1 L9 9 M9 1 L1 9" stroke="#6f7376" stroke-width="1.1" fill="none"/></svg>
<svg style="left:545.5px;top:80.0px" width="18" height="18" viewBox="0 0 18 18"><path d="M6.8 0.5 H13.2 V9 L8 12.5 V16 H1.5 V5.8 H6.8 Z" fill="#8b949b"/><path d="M5.6 0.5 L1.5 4.6 H5.6 Z" fill="#8b949b"/><path d="M8.6 11.4 L11.2 8.6 H14.6 L17.6 11.6 V15.4 L15.4 17.6 H13 Z" fill="#418fde"/><path d="M8.6 11.4 L11.2 8.6 L17.6 15.4 L15.4 17.6 H13 Z" fill="#a6cdf3"/><path d="M8.6 11.4 L15.4 17.6 H13 L8.6 13.6 Z" fill="#2f78c8"/></svg>
<span class="t" style="left:568px;top:80.0px;font-size:15px;letter-spacing:-0.181px;color:#bbbbbb;">login_screen.dart</span>
<svg style="left:690.0px;top:85.0px" width="10" height="10" viewBox="0 0 10 10"><path d="M1 1 L9 9 M9 1 L1 9" stroke="#6f7376" stroke-width="1.1" fill="none"/></svg>
<svg style="left:720.5px;top:80.0px" width="18" height="18" viewBox="0 0 18 18"><path d="M6.8 0.5 H13.2 V9 L8 12.5 V16 H1.5 V5.8 H6.8 Z" fill="#8b949b"/><path d="M5.6 0.5 L1.5 4.6 H5.6 Z" fill="#8b949b"/><path d="M8.6 11.4 L11.2 8.6 H14.6 L17.6 11.6 V15.4 L15.4 17.6 H13 Z" fill="#418fde"/><path d="M8.6 11.4 L11.2 8.6 L17.6 15.4 L15.4 17.6 H13 Z" fill="#a6cdf3"/><path d="M8.6 11.4 L15.4 17.6 H13 L8.6 13.6 Z" fill="#2f78c8"/></svg>
<span class="t" style="left:743px;top:80.0px;font-size:15px;letter-spacing:-0.023px;color:#bbbbbb;">custom_button.dart</span>
<svg style="left:881.0px;top:85.0px" width="10" height="10" viewBox="0 0 10 10"><path d="M1 1 L9 9 M9 1 L1 9" stroke="#6f7376" stroke-width="1.1" fill="none"/></svg>
<svg style="left:912.5px;top:80.0px" width="18" height="18" viewBox="0 0 18 18"><path d="M6.8 0.5 H13.2 V9 L8 12.5 V16 H1.5 V5.8 H6.8 Z" fill="#8b949b"/><path d="M5.6 0.5 L1.5 4.6 H5.6 Z" fill="#8b949b"/><path d="M8.6 11.4 L11.2 8.6 H14.6 L17.6 11.6 V15.4 L15.4 17.6 H13 Z" fill="#418fde"/><path d="M8.6 11.4 L11.2 8.6 L17.6 15.4 L15.4 17.6 H13 Z" fill="#a6cdf3"/><path d="M8.6 11.4 L15.4 17.6 H13 L8.6 13.6 Z" fill="#2f78c8"/></svg>
<span class="t" style="left:935px;top:80.0px;font-size:15px;letter-spacing:-0.390px;color:#bbbbbb;">past_rides_screen.dart</span>
<svg style="left:1088.0px;top:85.0px" width="10" height="10" viewBox="0 0 10 10"><path d="M1 1 L9 9 M9 1 L1 9" stroke="#6f7376" stroke-width="1.1" fill="none"/></svg>
<svg style="left:1119.5px;top:80.0px" width="18" height="18" viewBox="0 0 18 18"><path d="M6.8 0.5 H13.2 V9 L8 12.5 V16 H1.5 V5.8 H6.8 Z" fill="#8b949b"/><path d="M5.6 0.5 L1.5 4.6 H5.6 Z" fill="#8b949b"/><path d="M8.6 11.4 L11.2 8.6 H14.6 L17.6 11.6 V15.4 L15.4 17.6 H13 Z" fill="#418fde"/><path d="M8.6 11.4 L11.2 8.6 L17.6 15.4 L15.4 17.6 H13 Z" fill="#a6cdf3"/><path d="M8.6 11.4 L15.4 17.6 H13 L8.6 13.6 Z" fill="#2f78c8"/></svg>
<span class="t" style="left:1142px;top:80.0px;font-size:15px;letter-spacing:-0.120px;color:#bbbbbb;">past_rides_top_widget.dart</span>
<svg style="left:1328.0px;top:85.0px" width="10" height="10" viewBox="0 0 10 10"><path d="M1 1 L9 9 M9 1 L1 9" stroke="#6f7376" stroke-width="1.1" fill="none"/></svg>
<svg style="left:1369.0px;top:86.0px" width="12" height="8" viewBox="0 0 12 8"><path d="M1 1.5 L6 6.5 L11 1.5" stroke="#afb1b3" stroke-width="1.8" fill="none"/></svg>
<svg style="left:1408.0px;top:80.0px" width="4" height="18" viewBox="0 0 4 18"><circle cx="2" cy="2" r="1.8" fill="#afb1b3"/><circle cx="2" cy="9" r="1.8" fill="#afb1b3"/><circle cx="2" cy="16" r="1.8" fill="#afb1b3"/></svg>
<div class="a" style="left:253px;top:106px;width:1171px;height:540px;overflow:hidden;background:#2b2b2b">
<div class="a" style="left:0px;top:0px;width:68.5px;height:540px;background:#313335;"></div>
<div class="a" style="left:68.5px;top:205px;width:1103px;height:25px;background:#323232;"></div>
<div class="a" style="left:68px;top:0px;width:1px;height:540px;background:#5a5d5f;"></div>
<div class="a" style="left:107px;top:31px;width:1px;height:520px;background:#8c8c8c;"></div>
<div class="a" style="left:107px;top:69px;width:17px;height:1px;background:#8c8c8c;"></div>
<div class="a" style="left:126px;top:80px;width:1px;height:480px;background:#8c8c8c;"></div>
<span class="t mono" style="left:7px;top:-18px;line-height:25px;height:25px;font-size:13px;color:#606366">48</span>
<svg style="left:0;top:0" width="100" height="540"><path d="M63.5 0.5 H73.5 V-7.5 L68.5 -12.5 L63.5 -7.5 Z" fill="#313335" stroke="#6a6d70" stroke-width="1"/><path d="M66.0 -4.5 H71.0" stroke="#6a6d70" stroke-width="1"/></svg>
<span class="t mono" style="left:111px;top:-18.5px;line-height:25px;height:25px;color:#a9b7c6"></span>
<span class="t mono" style="left:7px;top:7px;line-height:25px;height:25px;font-size:13px;color:#606366">49</span>
<svg style="left:0;top:0" width="100" height="540"><path d="M63.5 14 H73.5 V22 L68.5 27 L63.5 22 Z" fill="#313335" stroke="#6a6d70" stroke-width="1"/><path d="M66.0 19 H71.0" stroke="#6a6d70" stroke-width="1"/></svg>
<span class="t mono" style="left:111px;top:6.5px;line-height:25px;height:25px;color:#a9b7c6"><span class="k">return</span> <span class="f">GestureDetector</span>(</span>
<span class="t mono" style="left:7px;top:32px;line-height:25px;height:25px;font-size:13px;color:#606366">50</span>
<span class="t mono" style="left:129px;top:31.5px;line-height:25px;height:25px;color:#a9b7c6">onTap: <span class="p">onPressed</span><span class="k">,</span></span>
<span class="t mono" style="left:7px;top:57px;line-height:25px;height:25px;font-size:13px;color:#606366">51</span>
<svg style="left:0;top:0" width="100" height="540"><path d="M63.5 64 H73.5 V72 L68.5 77 L63.5 72 Z" fill="#313335" stroke="#6a6d70" stroke-width="1"/><path d="M66.0 69 H71.0" stroke="#6a6d70" stroke-width="1"/></svg>
<span class="t mono" style="left:129px;top:56.5px;line-height:25px;height:25px;color:#a9b7c6">child: <span class="f">Container</span>(</span>
<span class="t mono" style="left:7px;top:82px;line-height:25px;height:25px;font-size:13px;color:#606366">52</span>
<span class="t mono" style="left:147px;top:81.5px;line-height:25px;height:25px;color:#a9b7c6">height: <span class="n">60</span>.<span class="p">h</span><span class="k">,</span></span>
<span class="t mono" style="left:7px;top:107px;line-height:25px;height:25px;font-size:13px;color:#606366">53</span>
<span class="t mono" style="left:147px;top:106.5px;line-height:25px;height:25px;color:#a9b7c6">margin: <span class="p">margin</span><span class="k">,</span></span>
<span class="t mono" style="left:7px;top:132px;line-height:25px;height:25px;font-size:13px;color:#606366">54</span>
<svg style="left:0;top:0" width="100" height="540"><path d="M63.5 139 H73.5 V147 L68.5 152 L63.5 147 Z" fill="#313335" stroke="#6a6d70" stroke-width="1"/><path d="M66.0 144 H71.0" stroke="#6a6d70" stroke-width="1"/></svg>
<span class="t mono" style="left:147px;top:131.5px;line-height:25px;height:25px;color:#a9b7c6">decoration: <span class="f">BoxDecoration</span>(</span>
<span class="t mono" style="left:7px;top:157px;line-height:25px;height:25px;font-size:13px;color:#606366">55</span>
<span class="t mono" style="left:165px;top:156.5px;line-height:25px;height:25px;color:#a9b7c6">gradient: <span class="p">gradientColors</span> != <span class="k">null</span></span>
<span class="t mono" style="left:7px;top:182px;line-height:25px;height:25px;font-size:13px;color:#606366">56</span>
<svg style="left:0;top:0" width="100" height="540"><path d="M63.5 189 H73.5 V197 L68.5 202 L63.5 197 Z" fill="#313335" stroke="#6a6d70" stroke-width="1"/><path d="M66.0 194 H71.0" stroke="#6a6d70" stroke-width="1"/></svg>
<span class="t mono" style="left:201px;top:181.5px;line-height:25px;height:25px;color:#a9b7c6">? <span class="f">LinearGradient</span>(</span>
<span class="t mono" style="left:7px;top:207px;line-height:25px;height:25px;font-size:13px;color:#a4a3a3">57</span>
<span class="t mono" style="left:237px;top:206.5px;line-height:25px;height:25px;color:#a9b7c6">colors: <span class="p">gradientColors</span>!<span class="k">,</span></span>
<span class="t mono" style="left:7px;top:232px;line-height:25px;height:25px;font-size:13px;color:#606366">58</span>
<span class="t mono" style="left:237px;top:231.5px;line-height:25px;height:25px;color:#a9b7c6">end: Alignment.<span class="i">bottomCenter</span><span class="k">,</span></span>
<span class="t mono" style="left:7px;top:257px;line-height:25px;height:25px;font-size:13px;color:#606366">59</span>
<svg style="left:0;top:0" width="100" height="540"><path d="M63.5 275.5 H73.5 V267.5 L68.5 262.5 L63.5 267.5 Z" fill="#313335" stroke="#6a6d70" stroke-width="1"/><path d="M66.0 270.5 H71.0" stroke="#6a6d70" stroke-width="1"/></svg>
<span class="t mono" style="left:237px;top:256.5px;line-height:25px;height:25px;color:#a9b7c6">begin: Alignment.<span class="i">topCenter</span>)  <span class="c">// LinearGradient</span></span>
<span class="t mono" style="left:7px;top:282px;line-height:25px;height:25px;font-size:13px;color:#606366">60</span>
<span class="t mono" style="left:201px;top:281.5px;line-height:25px;height:25px;color:#a9b7c6">: <span class="k">null,</span></span>
<span class="t mono" style="left:7px;top:307px;line-height:25px;height:25px;font-size:13px;color:#606366">61</span>
<span class="t mono" style="left:165px;top:306.5px;line-height:25px;height:25px;color:#a9b7c6">borderRadius: <span class="f">BorderRadius</span>.<span class="f">circular</span>(<span class="p">borderRadius</span>)<span class="k">,</span></span>
<span class="t mono" style="left:7px;top:332px;line-height:25px;height:25px;font-size:13px;color:#606366">62</span>
<span class="t mono" style="left:165px;top:331.5px;line-height:25px;height:25px;color:#a9b7c6">color: <span class="p">color</span><span class="k">,</span></span>
<span class="t mono" style="left:7px;top:357px;line-height:25px;height:25px;font-size:13px;color:#606366">63</span>
<span class="t mono" style="left:165px;top:356.5px;line-height:25px;height:25px;color:#a9b7c6">border: <span class="p">borderColor</span> != <span class="k">null</span> ? <span class="f">Border</span>.<span class="f">all</span>(color: <span class="p">borderColor</span>!<span class="k">,</span>width: <span class="p">borderWidth</span>??<span class="n">1</span>) : <span class="k">null,</span></span>
<span class="t mono" style="left:7px;top:382px;line-height:25px;height:25px;font-size:13px;color:#606366">64</span>
<svg style="left:0;top:0" width="100" height="540"><path d="M63.5 389 H73.5 V397 L68.5 402 L63.5 397 Z" fill="#313335" stroke="#6a6d70" stroke-width="1"/><path d="M66.0 394 H71.0" stroke="#6a6d70" stroke-width="1"/></svg>
<span class="t mono" style="left:165px;top:381.5px;line-height:25px;height:25px;color:#a9b7c6">boxShadow: [</span>
<span class="t mono" style="left:7px;top:407px;line-height:25px;height:25px;font-size:13px;color:#606366">65</span>
<svg style="left:0;top:0" width="100" height="540"><path d="M63.5 414 H73.5 V422 L68.5 427 L63.5 422 Z" fill="#313335" stroke="#6a6d70" stroke-width="1"/><path d="M66.0 419 H71.0" stroke="#6a6d70" stroke-width="1"/></svg>
<span class="t mono" style="left:183px;top:406.5px;line-height:25px;height:25px;color:#a9b7c6"><span class="f">BoxShadow</span>(</span>
<span class="t mono" style="left:7px;top:432px;line-height:25px;height:25px;font-size:13px;color:#606366">66</span>
<span class="t mono" style="left:201px;top:431.5px;line-height:25px;height:25px;color:#a9b7c6">color: Colors.<span class="i">grey</span>.withOpacity(<span class="n">0.3</span>)<span class="k">,</span></span>
<span class="t mono" style="left:7px;top:457px;line-height:25px;height:25px;font-size:13px;color:#606366">67</span>
<span class="t mono" style="left:201px;top:456.5px;line-height:25px;height:25px;color:#a9b7c6">spreadRadius: -<span class="n">1</span><span class="k">,</span></span>
<span class="t mono" style="left:7px;top:482px;line-height:25px;height:25px;font-size:13px;color:#606366">68</span>
<span class="t mono" style="left:201px;top:481.5px;line-height:25px;height:25px;color:#a9b7c6">blurRadius: <span class="n">5</span>.<span class="p">sp</span><span class="k">,</span></span>
<span class="t mono" style="left:7px;top:507px;line-height:25px;height:25px;font-size:13px;color:#606366">69</span>
<svg style="left:0;top:0" width="100" height="540"><path d="M63.5 525.5 H73.5 V517.5 L68.5 512.5 L63.5 517.5 Z" fill="#313335" stroke="#6a6d70" stroke-width="1"/><path d="M66.0 520.5 H71.0" stroke="#6a6d70" stroke-width="1"/></svg>
<span class="t mono" style="left:183px;top:506.5px;line-height:25px;height:25px;color:#a9b7c6">)<span class="k">,</span>  <span class="c">// BoxShadow</span></span>
<span class="t mono" style="left:7px;top:532px;line-height:25px;height:25px;font-size:13px;color:#606366">70</span>
<svg style="left:0;top:0" width="100" height="540"><path d="M63.5 550.5 H73.5 V542.5 L68.5 537.5 L63.5 542.5 Z" fill="#313335" stroke="#6a6d70" stroke-width="1"/><path d="M66.0 545.5 H71.0" stroke="#6a6d70" stroke-width="1"/></svg>
<span class="t mono" style="left:165px;top:531.5px;line-height:25px;height:25px;color:#a9b7c6">]<span class="k">,</span></span>
<svg style="left:86.5px;top:205.5px" width="12" height="17" viewBox="0 0 12 17"><path d="M6 0.5 A5.5 5.5 0 0 1 9 10.6 V12 H3 V10.6 A5.5 5.5 0 0 1 6 0.5 Z" fill="#f2b340"/><rect x="3.2" y="13" width="5.6" height="1.4" fill="#c9cbcd"/><rect x="4" y="15.2" width="4" height="1.3" fill="#c9cbcd"/></svg>
<svg style="left:1085.0px;top:10.0px" width="15" height="17" viewBox="0 0 15 17"><path d="M1.2 7 L5.6 11.4 L13.8 2" stroke="#499c54" stroke-width="2.8" fill="none"/><path d="M0.5 15.6 L2.6 13.6 L4.7 15.6 L6.8 13.6 L8.9 15.6 L11 13.6 L13.1 15.6" stroke="#499c54" stroke-width="1.1" fill="none"/></svg>
<span class="t" style="left:1103px;top:7.5px;font-size:15px;color:#bbbbbb;">2</span>
<svg style="left:1124.0px;top:13.0px" width="12" height="8" viewBox="0 0 12 8"><path d="M1 6.5 L6 1.5 L11 6.5" stroke="#bbbbbb" stroke-width="1.6" fill="none"/></svg>
<svg style="left:1151.0px;top:13.0px" width="12" height="8" viewBox="0 0 12 8"><path d="M1 1.5 L6 6.5 L11 1.5" stroke="#bbbbbb" stroke-width="1.6" fill="none"/></svg>
<div class="a" style="left:1159.5px;top:305px;width:11.5px;height:124px;background:#4a4a4a;"></div>
</div>
<div class="a" style="left:30px;top:646px;width:1394px;height:1px;background:#323232;"></div>
<div class="a" style="left:30px;top:647px;width:1394px;height:328px;background:#3c3f41;"></div>
<div class="a" style="left:30px;top:680px;width:1394px;height:1px;background:#323232;"></div>
<span class="t" style="left:37.5px;top:655.0px;font-size:15px;letter-spacing:-1.046px;color:#bbbbbb;">Run:</span>
<svg style="left:90.0px;top:655.5px" width="17" height="17" viewBox="0 0 16 16"><path d="M9.6 0.5 H14 L5.3 9.2 L3.1 7 Z" fill="#47c5fb"/><path d="M9.6 7.4 H14 L9.7 11.7 L7.5 9.5 Z" fill="#47c5fb"/><path d="M7.5 13.9 L9.6 16 H14 L9.7 11.7 Z" fill="#00569e"/><path d="M5.3 11.7 L7.5 9.5 L9.7 11.7 L7.5 13.9 Z" fill="#00b5f8"/></svg>
<span class="t" style="left:113.5px;top:655.0px;font-size:15px;letter-spacing:-0.169px;color:#bbbbbb;">main.dart (Resizable)</span>
<svg style="left:262.0px;top:660.0px" width="10" height="10" viewBox="0 0 10 10"><path d="M1 1 L9 9 M9 1 L1 9" stroke="#6f7376" stroke-width="1.1" fill="none"/></svg>
<div class="a" style="left:74px;top:678px;width:212px;height:3px;background:#70757a;border-radius:2px"></div>
<svg style="left:1366.6px;top:655.6px" width="16.8" height="16.8" viewBox="0 0 16 16"><g transform="translate(8 8)"><rect x="-2.2" y="-8" width="4.4" height="5" rx="0.8" transform="rotate(0)" fill="#afb1b3"/><rect x="-2.2" y="-8" width="4.4" height="5" rx="0.8" transform="rotate(60)" fill="#afb1b3"/><rect x="-2.2" y="-8" width="4.4" height="5" rx="0.8" transform="rotate(120)" fill="#afb1b3"/><rect x="-2.2" y="-8" width="4.4" height="5" rx="0.8" transform="rotate(180)" fill="#afb1b3"/><rect x="-2.2" y="-8" width="4.4" height="5" rx="0.8" transform="rotate(240)" fill="#afb1b3"/><rect x="-2.2" y="-8" width="4.4" height="5" rx="0.8" transform="rotate(300)" fill="#afb1b3"/><circle r="5.6" fill="#afb1b3"/><circle r="2.3" fill="#3c3f41"/></g></svg>
<svg style="left:1401.0px;top:663.0px" width="14" height="2" viewBox="0 0 14 2"><rect width="14" height="2" fill="#afb1b3"/></svg>
<div class="a" style="left:65px;top:681px;width:1px;height:294px;background:#323232;"></div>
<div class="a" style="left:41px;top:693px;width:12.5px;height:12.5px;background:#c75450;"></div>
<svg style="left:38.0px;top:722.0px" width="18" height="18" viewBox="0 0 18 18"><path d="M10 1 L17 8 L15.5 9 L13.5 8.5 L10.5 11.5 L10.5 14.5 L9 16 L2 9 L3.5 7.5 L6.5 7.5 L9.5 4.5 L9 2.5 Z" fill="#afb1b3"/><path d="M5.5 12.5 L0.5 17.5" stroke="#afb1b3" stroke-width="1.5"/></svg>
<div class="a" style="left:66px;top:716px;width:1358px;height:1px;background:#323232;"></div>
<span class="t" style="left:82.5px;top:691.0px;font-size:13.5px;letter-spacing:-0.505px;color:#bbbbbb;">Console</span>
<svg style="left:154.5px;top:690.0px" width="11" height="18" viewBox="0 0 11 18"><path d="M7 0 L1 10 H5 L3.5 18 L10 7.5 H6 Z" fill="#f0a732"/></svg>
<svg style="left:183.0px;top:689.5px" width="19" height="19" viewBox="0 0 19 19"><path d="M6 13 H4 A2.5 2.5 0 0 1 1.5 10.5 V4.5 A2.5 2.5 0 0 1 4 2 H13 A2.5 2.5 0 0 1 15.5 4.5 V8" fill="none" stroke="#2fa84a" stroke-width="2"/><path d="M4 10.5 L8 13.2 L4 16 Z" fill="#2fa84a" transform="translate(1 0)"/><path d="M15 8 L11 14 H14 L13 19 L17.5 12.5 H14.5 Z" fill="#f0a732"/></svg>
<div class="a" style="left:213px;top:688px;width:1px;height:24px;background:#55585a;"></div>
<svg style="left:225.5px;top:689.0px" width="20" height="20" viewBox="0 0 20 20"><path d="M2 9 L7 2 H13 L19 9 V15 L15 18 H9 Z" fill="#5a8fd6"/><path d="M2 9 L9 18 H15 L19 15 Z" fill="#7fb0ec" opacity=".7"/><path d="M2 9 L7 2 L12 8 L19 15" fill="none" stroke="#3c6fb5" stroke-width=".8"/></svg>
<svg style="left:1402.0px;top:693.5px" width="16" height="14" viewBox="0 0 16 14"><rect x="0" y="0" width="7" height="5" fill="#afb1b3"/><rect x="8.5" y="0" width="7" height="5" fill="#afb1b3"/><rect x="0" y="6.5" width="15.5" height="4" fill="#afb1b3"/><path d="M10 12 H16 L13 15 Z" fill="#afb1b3"/></svg>
<div class="a" style="left:66px;top:717px;width:35px;height:258px;background:#3c3f41;"></div>
<div class="a" style="left:101px;top:717px;width:1323px;height:258px;background:#2b2b2b;"></div>
<svg style="left:76.0px;top:728.0px" width="14" height="16" viewBox="0 0 14 16"><path d="M7 15 V2 M1.5 7.5 L7 2 L12.5 7.5" stroke="#afb1b3" stroke-width="1.8" fill="none"/></svg>
<svg style="left:76.0px;top:760.0px" width="14" height="16" viewBox="0 0 14 16"><path d="M7 1 V14 M1.5 8.5 L7 14 L12.5 8.5" stroke="#afb1b3" stroke-width="1.8" fill="none"/></svg>
<div class="a" style="left:69.5px;top:788px;width:27.5px;height:27px;background:#4c5052;border-radius:4px"></div>
<svg style="left:75.0px;top:794.0px" width="16" height="14" viewBox="0 0 16 14"><path d="M0 1.5 H16 M0 7 H11.5 A3 3 0 0 1 11.5 13 H8 M0 12.5 H4" stroke="#afb1b3" stroke-width="1.8" fill="none"/><path d="M10 10 L6.5 13 L10 16" fill="none" stroke="#afb1b3" stroke-width="1.8" transform="translate(0 -0.2)"/></svg>
<div class="a" style="left:69.5px;top:820px;width:27.5px;height:27px;background:#4c5052;border-radius:4px"></div>
<svg style="left:75.0px;top:825.5px" width="16" height="15" viewBox="0 0 16 15"><path d="M10 0 V9 M6 5.5 L10 9.5 L14 5.5 M0 6 H5 M0 10 H5 M0 14 H16" stroke="#afb1b3" stroke-width="1.8" fill="none"/></svg>
<svg style="left:74.5px;top:858.5px" width="17" height="15" viewBox="0 0 17 15"><rect x="3.5" y="0" width="10" height="3.5" fill="#afb1b3"/><path d="M0 5 H17 V12 H14 V9 H3 V12 H0 Z" fill="#afb1b3"/><rect x="4.5" y="10.5" width="8" height="4.5" fill="#afb1b3"/></svg>
<svg style="left:77.0px;top:890.0px" width="12" height="16" viewBox="0 0 12 16"><path d="M0 2.5 H12 V4.5 H0 Z M4 0.5 H8 V2.5 H4 Z M1 6 H11 V16 H1 Z" fill="#afb1b3"/></svg>
<div class="a" style="left:101px;top:717px;width:1312px;height:258px;overflow:hidden">
<span class="t mono" style="left:13.5px;top:-15.5px;line-height:25px;height:25px;color:#bbbbbb">I/Counters( 7783): exceeded sample count in FrameTime</span>
<span class="t mono" style="left:13.5px;top:9.5px;line-height:25px;height:25px;color:#bbbbbb">I/Counters( 7783): exceeded sample count in FrameTime</span>
<span class="t mono" style="left:13.5px;top:34.5px;line-height:25px;height:25px;color:#bbbbbb">I/Counters( 7783): exceeded sample count in FrameTime</span>
<span class="t mono" style="left:13.5px;top:59.5px;line-height:25px;height:25px;color:#bbbbbb">I/Counters( 7783): exceeded sample count in FrameTime</span>
<span class="t mono" style="left:13.5px;top:84.5px;line-height:25px;height:25px;color:#bbbbbb">I/Counters( 7783): exceeded sample count in FrameTime</span>
<span class="t mono" style="left:13.5px;top:109.5px;line-height:25px;height:25px;color:#bbbbbb">I/Counters( 7783): exceeded sample count in FrameTime</span>
<span class="t mono" style="left:13.5px;top:134.5px;line-height:25px;height:25px;color:#bbbbbb">I/Counters( 7783): exceeded sample count in FrameTime</span>
<span class="t mono" style="left:13.5px;top:159.5px;line-height:25px;height:25px;color:#bbbbbb">I/Counters( 7783): exceeded sample count in FrameTime</span>
<span class="t mono" style="left:13.5px;top:184.5px;line-height:25px;height:25px;color:#bbbbbb">I/Counters( 7783): exceeded sample count in FrameTime</span>
<span class="t mono" style="left:13.5px;top:209.5px;line-height:25px;height:25px;color:#bbbbbb">I/Counters( 7783): exceeded sample count in FrameTime</span>
</div>
<div class="a" style="left:1413.5px;top:941px;width:10px;height:33px;background:#4a4a4a;"></div>
<div class="a" style="left:0px;top:975px;width:1453px;height:1px;background:#323232;"></div>
<div class="a" style="left:2px;top:976px;width:1451px;height:27px;background:#3c3f41;"></div>
<div class="a" style="left:0px;top:1003px;width:1453px;height:1px;background:#323232;"></div>
<div class="a" style="left:0px;top:1004px;width:1453px;height:24px;background:#3c3f41;"></div>
<div class="a" style="left:88.5px;top:976px;width:65.5px;height:27px;background:#2d2f30;"></div>
<span class="t" style="left:61.5px;top:981.5px;font-size:13.5px;letter-spacing:-0.750px;color:#bbbbbb;">Git</span>
<span class="t" style="left:122px;top:981.5px;font-size:13.5px;letter-spacing:-0.922px;color:#ffffff;">Run</span>
<span class="t" style="left:188px;top:981.5px;font-size:13.5px;letter-spacing:-0.813px;color:#bbbbbb;">TODO</span>
<span class="t" style="left:271px;top:981.5px;font-size:13.5px;letter-spacing:-0.253px;color:#bbbbbb;">Problems</span>
<span class="t" style="left:373px;top:981.5px;font-size:13.5px;letter-spacing:-0.127px;color:#bbbbbb;">Terminal</span>
<span class="t" style="left:468px;top:981.5px;font-size:13.5px;letter-spacing:-0.256px;color:#bbbbbb;">Logcat</span>
<span class="t" style="left:556px;top:981.5px;font-size:13.5px;letter-spacing:-0.203px;color:#bbbbbb;">App Quality Insights</span>
<span class="t" style="left:723px;top:981.5px;font-size:13.5px;letter-spacing:-0.658px;color:#bbbbbb;">Services</span>
<span class="t" style="left:818px;top:981.5px;font-size:13.5px;letter-spacing:-0.237px;color:#bbbbbb;">App Inspection</span>
<span class="t" style="left:956px;top:981.5px;font-size:13.5px;letter-spacing:-0.368px;color:#bbbbbb;">Dart Analysis</span>
<svg style="left:41.5px;top:984.0px" width="10" height="14" viewBox="0 0 10 14"><circle cx="2.5" cy="2.5" r="2" fill="#afb1b3"/><circle cx="2.5" cy="12" r="2" fill="#afb1b3"/><circle cx="8" cy="4.5" r="2" fill="#afb1b3"/><path d="M2.5 2.5 V12 M2.5 9 C2.5 7 8 8 8 4.5" stroke="#afb1b3" stroke-width="1.6" fill="none"/></svg>
<svg style="left:102.5px;top:985.0px" width="10" height="12" viewBox="0 0 10 12"><path d="M0 0 L10 6 L0 12 Z" fill="#afb1b3"/></svg>
<svg style="left:169.0px;top:985.5px" width="13" height="11" viewBox="0 0 13 11"><path d="M0 1 H2.5 M4 1 H13 M0 5.5 H2.5 M4 5.5 H13 M0 10 H2.5 M4 10 H13" stroke="#afb1b3" stroke-width="2"/></svg>
<svg style="left:250.5px;top:984.5px" width="13" height="13" viewBox="0 0 13 13"><circle cx="6.5" cy="6.5" r="6.5" fill="#afb1b3"/><rect x="5.6" y="2.5" width="1.8" height="5.3" fill="#3c3f41"/><rect x="5.6" y="9" width="1.8" height="1.8" fill="#3c3f41"/></svg>
<svg style="left:352.5px;top:985.0px" width="14" height="12" viewBox="0 0 14 12"><rect width="14" height="12" fill="#afb1b3"/><path d="M2.5 3 L6 6 L2.5 9 M7 9.3 H11.5" stroke="#3c3f41" stroke-width="1.4" fill="none"/></svg>
<svg style="left:447.5px;top:986.5px" width="13" height="10" viewBox="0 0 13 10"><path d="M0 1 H13 M0 5 H8 M0 9 H10.5" stroke="#afb1b3" stroke-width="2"/></svg>
<svg style="left:534.5px;top:984.0px" width="15" height="14" viewBox="0 0 15 14"><path d="M4 0.7 H11 L14.3 4.5 L7.5 13.3 L0.7 4.5 Z M0.7 4.5 H14.3 M4 0.7 L5.3 4.5 L7.5 13.3 L9.7 4.5 L11 0.7" fill="none" stroke="#afb1b3" stroke-width="1.1"/></svg>
<svg style="left:702.5px;top:984.0px" width="14" height="14" viewBox="0 0 14 14"><path d="M4 0 H10 L14 4 V10 L10 14 H4 L0 10 V4 Z" fill="#afb1b3"/><path d="M5.5 4 L10 7 L5.5 10 Z" fill="#3c3f41"/></svg>
<svg style="left:799.0px;top:984.0px" width="12" height="14" viewBox="0 0 12 14"><path d="M2 3 A4 3 0 0 1 10 3 V10 A2 2 0 0 1 8 12 H4 A2 2 0 0 1 2 10 Z" fill="#afb1b3"/><path d="M0 5 V9 M12 5 V9 M4.5 12 V14 M7.5 12 V14" stroke="#afb1b3" stroke-width="1.6"/></svg>
<svg style="left:934.0px;top:984.5px" width="15" height="13" viewBox="0 0 15 13"><path d="M3 5 L7 1 H11 L14 4 V8 L10.5 12 H8 Z" fill="#afb1b3"/><circle cx="4" cy="9.5" r="3.3" fill="#f0a732"/><circle cx="4" cy="9.5" r="1.4" fill="#c27a12"/></svg>
<svg style="left:11.5px;top:1010.5px" width="11" height="11" viewBox="0 0 11 11"><rect x=".6" y="2.6" width="7.8" height="7.8" fill="none" stroke="#afb1b3" stroke-width="1.2"/><path d="M2.6 2.6 V.6 H10.4 V8.4 H8.4" fill="none" stroke="#afb1b3" stroke-width="1.2"/></svg>
<span class="t" style="left:983px;top:1005.3px;font-size:15px;letter-spacing:-0.608px;color:#bbbbbb;">57:43</span>
<span class="t" style="left:1033px;top:1005.3px;font-size:15px;letter-spacing:-1.793px;color:#bbbbbb;">CRLF</span>
<span class="t" style="left:1081px;top:1005.3px;font-size:15px;letter-spacing:-0.799px;color:#bbbbbb;">UTF-8</span>
<span class="t" style="left:1135px;top:1005.3px;font-size:15px;letter-spacing:-0.505px;color:#bbbbbb;">2 spaces</span>
<svg style="left:1209.0px;top:1008.0px" width="12" height="16" viewBox="0 0 12 16"><circle cx="2.5" cy="2.5" r="2" fill="#afb1b3"/><circle cx="2.5" cy="13.5" r="2" fill="#afb1b3"/><circle cx="9.5" cy="3.5" r="2" fill="#afb1b3"/><path d="M2.5 2.5 V13.5 M2.5 10 C2.5 7.5 9.5 8 9.5 3.5" stroke="#afb1b3" stroke-width="1.6" fill="none"/><circle cx="8.5" cy="13" r="3" fill="#3aa655"/></svg>
<span class="t" style="left:1227.5px;top:1005.3px;font-size:15px;letter-spacing:-0.836px;color:#bbbbbb;">Nasser</span>
<svg style="left:1283.5px;top:1009.5px" width="13" height="13" viewBox="0 0 13 13"><rect x="3" y="6" width="10" height="7" fill="#afb1b3"/><path d="M1 6 V3.5 A2.5 2.5 0 0 1 6 3.5 V6" fill="none" stroke="#afb1b3" stroke-width="1.6"/></svg>
<svg style="left:1314.0px;top:1009.5px" width="14" height="13" viewBox="0 0 14 13"><path d="M0 0 H14 V10 H5 L2 13 V10 H0 Z" fill="#afb1b3"/><rect x="6.2" y="2" width="1.7" height="4" fill="#3c3f41"/><rect x="6.2" y="7" width="1.7" height="1.5" fill="#3c3f41"/></svg>
<div class="a" style="left:1337px;top:1005px;width:101px;height:23px;background:#45494b;"></div>
<div class="a" style="left:1337px;top:1005px;width:77px;height:23px;background:#53585b;"></div>
<span class="t" style="left:1345px;top:1005.3px;font-size:15px;letter-spacing:-0.103px;color:#bbbbbb;">849 of 1280M</span>
<svg style="left:830px;top:880px;opacity:.30" width="260" height="140" viewBox="830 880 260 140"><text x="845" y="956.5" font-family="DejaVu Sans,sans-serif" font-weight="bold" font-size="80" fill="#fff" textLength="230" lengthAdjust="spacingAndGlyphs">مستقل</text><text x="845.5" y="999" font-family="Liberation Sans,sans-serif" font-weight="bold" font-size="38.5" fill="#fff" stroke="#fff" stroke-width="1.2" textLength="229" lengthAdjust="spacingAndGlyphs">mostaql.com</text></svg>
<div class="a" style="left:1458px;top:0px;width:462px;height:1028px;background:#3c3f41;"></div>
<div class="a" style="left:1458px;top:0px;width:462px;height:1px;background:#2b2b2b;"></div>
<div class="a" style="left:1458px;top:1px;width:462px;height:1px;background:#5a5d5f;"></div>
<div class="a" style="left:1458px;top:1px;width:1.5px;height:1027px;background:#5a5d5f;"></div>
<div class="a" style="left:1462px;top:4.5px;width:455px;height:34.5px;background:#3b4554;"></div>
<div class="a" style="left:1462px;top:39px;width:455px;height:2px;background:#3a3d40;"></div>
<span class="t" style="left:1469px;top:14.0px;font-size:15px;letter-spacing:-0.285px;color:#bbbbbb;">Running Devices:</span>
<svg style="left:1610.0px;top:15.0px" width="14" height="16" viewBox="0 0 14 16"><path d="M2 11 V2.2 A1.2 1.2 0 0 1 3.2 1 H9 A1.2 1.2 0 0 1 10.2 2.2 V7" fill="none" stroke="#afb1b3" stroke-width="1.5"/><rect x="0" y="11" width="6" height="3" fill="#afb1b3"/><rect x="8" y="9" width="5" height="6" fill="#3b4554" stroke="#afb1b3" stroke-width="1.2"/><circle cx="12" cy="14" r="2" fill="#1fd660"/></svg>
<span class="t" style="left:1631px;top:14.0px;font-size:15px;letter-spacing:-0.319px;color:#bbbbbb;">Resizable</span>
<svg style="left:1702.5px;top:19.5px" width="9" height="9" viewBox="0 0 9 9"><path d="M.5 .5 L8.5 8.5 M8.5 .5 L.5 8.5" stroke="#7f8b99" stroke-width="1.1"/></svg>
<div class="a" style="left:1591px;top:34.5px;width:135px;height:3px;background:#4a88c7;border-radius:2px"></div>
<svg style="left:1828.5px;top:15.0px" width="15" height="15" viewBox="0 0 15 15"><rect x=".8" y=".8" width="13.4" height="13.4" fill="none" stroke="#afb1b3" stroke-width="1.5"/><rect x="8.5" y="7" width="5" height="7" fill="#afb1b3"/></svg>
<svg style="left:1859.6px;top:13.6px" width="16.8" height="16.8" viewBox="0 0 16 16"><g transform="translate(8 8)"><rect x="-2.2" y="-8" width="4.4" height="5" rx="0.8" transform="rotate(0)" fill="#afb1b3"/><rect x="-2.2" y="-8" width="4.4" height="5" rx="0.8" transform="rotate(60)" fill="#afb1b3"/><rect x="-2.2" y="-8" width="4.4" height="5" rx="0.8" transform="rotate(120)" fill="#afb1b3"/><rect x="-2.2" y="-8" width="4.4" height="5" rx="0.8" transform="rotate(180)" fill="#afb1b3"/><rect x="-2.2" y="-8" width="4.4" height="5" rx="0.8" transform="rotate(240)" fill="#afb1b3"/><rect x="-2.2" y="-8" width="4.4" height="5" rx="0.8" transform="rotate(300)" fill="#afb1b3"/><circle r="5.6" fill="#afb1b3"/><circle r="2.3" fill="#3b4554"/></g></svg>
<svg style="left:1893.5px;top:21.0px" width="15" height="2" viewBox="0 0 15 2"><rect width="15" height="2" fill="#afb1b3"/></svg>
<div class="a" style="left:1462px;top:41px;width:454px;height:26px;background:#0b0d11;"></div>
<span class="t" style="left:1471px;top:45.0px;font-size:15px;letter-spacing:-0.299px;color:#ffffff;">6:01</span>
<svg style="left:1508.5px;top:47.0px" width="15" height="15" viewBox="0 0 15 15"><g transform="translate(7.5 7.5)"><rect x="-1.3" y="-7.5" width="2.6" height="3" transform="rotate(0)" fill="#fff"/><rect x="-1.3" y="-7.5" width="2.6" height="3" transform="rotate(45)" fill="#fff"/><rect x="-1.3" y="-7.5" width="2.6" height="3" transform="rotate(90)" fill="#fff"/><rect x="-1.3" y="-7.5" width="2.6" height="3" transform="rotate(135)" fill="#fff"/><rect x="-1.3" y="-7.5" width="2.6" height="3" transform="rotate(180)" fill="#fff"/><rect x="-1.3" y="-7.5" width="2.6" height="3" transform="rotate(225)" fill="#fff"/><rect x="-1.3" y="-7.5" width="2.6" height="3" transform="rotate(270)" fill="#fff"/><rect x="-1.3" y="-7.5" width="2.6" height="3" transform="rotate(315)" fill="#fff"/><circle r="5" fill="none" stroke="#fff" stroke-width="1.8"/><path d="M-4.5 -0.5 H4.5 M0 -0.5 V4.5" stroke="#fff" stroke-width="1.5"/></g></svg>
<svg style="left:1836.5px;top:47.5px" width="17" height="13" viewBox="0 0 17 13"><path d="M0 3.2 A12 12 0 0 1 17 3.2 L8.5 13 Z" fill="#fff"/></svg>
<svg style="left:1855.0px;top:47.5px" width="14" height="13" viewBox="0 0 14 13"><path d="M14 0 V13 H0 Z" fill="#fff"/></svg>
<div class="a" style="left:1462px;top:67px;width:454px;height:932px;overflow:hidden;background:#242f3e">
<svg style="left:0;top:0" width="454" height="932" viewBox="1462 67 454 932" font-family="Liberation Sans,DejaVu Sans,sans-serif">
<polygon points="1640,67 1916,67 1916,176 1700,203 1686,204 1653,156 1640,118 1637,105" fill="#263c3f"/>
<polygon points="1700,207 1916,180 1916,191 1722,212" fill="#263c3f"/>
<polygon points="1590,72 1597,70 1601,86 1594,88" fill="#263c3f"/>
<rect x="1586" y="147" width="14" height="30" rx="6" fill="#263c3f"/>
<polygon points="1537,138 1546,136 1547,146 1538,148" fill="#263c3f"/>
<polygon points="1493,160 1552,148 1560,205 1530,215 1523,216 1497,180" fill="#263c3f"/>
<circle cx="1603.5" cy="231.5" r="17" fill="#263c3f"/>
<path d="M1518 230 Q1502 236 1505 252 Q1508 262 1519 264 Z" fill="#263c3f"/>
<polygon points="1640,218 1650,216 1652,232 1644,234" fill="#263c3f"/>
<polygon points="1676,216 1690,215 1690,226 1678,228" fill="#263c3f"/>
<polygon points="1597,282 1623,279 1626,312 1600,315" fill="#263c3f"/>
<polygon points="1497,240 1510,236 1508,246 1491,250" fill="#263c3f"/>
<polygon points="1519,293 1533,291 1534,301 1520,303" fill="#263c3f"/>
<polygon points="1630,704 1668,700 1671,724 1634,728" fill="#263c3f"/>
<polygon points="1598,728 1630,722 1634,760 1600,760" fill="#263c3f"/>
<polygon points="1613,808 1627,806 1628,838 1614,838" fill="#263c3f"/>
<polygon points="1462,934 1484,931 1488,965 1462,969" fill="#263c3f"/>
<polygon points="1860,760 1916,745 1916,800 1870,800" fill="#263c3f"/>
<path d="M1833 242 L1845 250 L1858 262 L1872 280 L1880 300 L1883 330 L1878 345 L1855 358 L1852 366 L1862 375 L1878 388 L1886 410 L1884 425" fill="none" stroke="#17263c" stroke-width="3.6" stroke-linecap="round" stroke-linejoin="round" />
<path d="M1811 450 L1832 420 L1843 423 L1850 440 L1853 452" fill="none" stroke="#17263c" stroke-width="3.6" stroke-linecap="round" stroke-linejoin="round" />
<polygon points="1847.5,436 1887,422.5 1900,475 1904.5,514.5 1891,532 1887,501 1865,475 1849.5,453" fill="#17263c"/>
<path d="M1893 522 L1882.5 562.5 L1869.5 593 L1891 624 L1908.5 641.5 L1916 648" fill="none" stroke="#17263c" stroke-width="4.5" stroke-linecap="round" stroke-linejoin="round" />
<path d="M1799.5 558.5 L1803.5 580 L1825.5 593 L1834.5 567 L1841 593 L1869.5 593" fill="none" stroke="#17263c" stroke-width="3.6" stroke-linecap="round" stroke-linejoin="round" />
<path d="M1680 116 L1755 104 L1838 92" fill="none" stroke="#333e4b" stroke-width="1" stroke-linecap="round" stroke-linejoin="round" />
<path d="M1755 74 L1757 127" fill="none" stroke="#333e4b" stroke-width="1" stroke-linecap="round" stroke-linejoin="round" />
<path d="M1680 145 L1700 142 L1730 150 L1760 142 L1790 120 L1838 100" fill="none" stroke="#333e4b" stroke-width="1" stroke-linecap="round" stroke-linejoin="round" />
<path d="M1680 165 L1720 172 L1760 188 L1790 182 L1800 150" fill="none" stroke="#333e4b" stroke-width="1" stroke-linecap="round" stroke-linejoin="round" />
<path d="M1866 123 L1866 178" fill="none" stroke="#333e4b" stroke-width="1" stroke-linecap="round" stroke-linejoin="round" />
<path d="M1680 392 L1700 405 L1740 406 L1790 400 L1818 395" fill="none" stroke="#333e4b" stroke-width="1" stroke-linecap="round" stroke-linejoin="round" />
<path d="M1803 311 L1818 395 L1846 364 L1852 336 L1842 308 L1820 302 L1803 311" fill="none" stroke="#333e4b" stroke-width="1" stroke-linecap="round" stroke-linejoin="round" />
<path d="M1842 308 L1850 290" fill="none" stroke="#333e4b" stroke-width="1" stroke-linecap="round" stroke-linejoin="round" />
<path d="M1789 290 L1788 312 L1797 313" fill="none" stroke="#333e4b" stroke-width="1" stroke-linecap="round" stroke-linejoin="round" />
<path d="M1818 395 L1846 416 L1880 410 L1916 412" fill="none" stroke="#333e4b" stroke-width="1" stroke-linecap="round" stroke-linejoin="round" />
<path d="M1846 364 L1862 374 L1890 355 L1908 378 L1892 392 L1896 430" fill="none" stroke="#333e4b" stroke-width="1" stroke-linecap="round" stroke-linejoin="round" />
<path d="M1890 355 L1888 290" fill="none" stroke="#333e4b" stroke-width="1" stroke-linecap="round" stroke-linejoin="round" />
<path d="M1908 378 L1916 366" fill="none" stroke="#333e4b" stroke-width="1" stroke-linecap="round" stroke-linejoin="round" />
<path d="M1890 355 L1908 366 L1916 367" fill="none" stroke="#333e4b" stroke-width="1" stroke-linecap="round" stroke-linejoin="round" />
<path d="M1811 400 L1800 430 L1803 452 L1811 458" fill="none" stroke="#333e4b" stroke-width="1" stroke-linecap="round" stroke-linejoin="round" />
<path d="M1720 445 Q1745 425 1776 440 Q1790 455 1785 490 L1796 506 L1795 530" fill="none" stroke="#333e4b" stroke-width="1" stroke-linecap="round" stroke-linejoin="round" />
<path d="M1720 445 Q1715 465 1722 490 L1745 525" fill="none" stroke="#333e4b" stroke-width="1" stroke-linecap="round" stroke-linejoin="round" />
<path d="M1836 430 L1848 470 L1850 495 L1836 500 L1834 530" fill="none" stroke="#333e4b" stroke-width="1" stroke-linecap="round" stroke-linejoin="round" />
<path d="M1836 500 L1875 500 L1886 515" fill="none" stroke="#333e4b" stroke-width="1" stroke-linecap="round" stroke-linejoin="round" />
<path d="M1790 555 L1800 545 L1845 540 L1870 560 L1872 590 L1800 603 L1790 585 Z" fill="none" stroke="#333e4b" stroke-width="1" stroke-linecap="round" stroke-linejoin="round" />
<path d="M1838 540 L1838 595" fill="none" stroke="#333e4b" stroke-width="1" stroke-linecap="round" stroke-linejoin="round" />
<path d="M1760 640 L1790 610" fill="none" stroke="#333e4b" stroke-width="1" stroke-linecap="round" stroke-linejoin="round" />
<path d="M1895 560 L1916 555" fill="none" stroke="#333e4b" stroke-width="1" stroke-linecap="round" stroke-linejoin="round" />
<circle cx="1603.5" cy="231.5" r="19" fill="none" stroke="#38414e" stroke-width="3"/>
<path d="M1462 85 L1500 75 L1510 67" fill="none" stroke="#38414e" stroke-width="3.2" stroke-linecap="round" stroke-linejoin="round" />
<path d="M1472 82 L1486 112" fill="none" stroke="#38414e" stroke-width="3.2" stroke-linecap="round" stroke-linejoin="round" />
<path d="M1554 67 L1563 92 L1530 105" fill="none" stroke="#38414e" stroke-width="3.2" stroke-linecap="round" stroke-linejoin="round" />
<path d="M1486 100 L1462 106" fill="none" stroke="#38414e" stroke-width="3.2" stroke-linecap="round" stroke-linejoin="round" />
<path d="M1500 122 L1530 112" fill="none" stroke="#38414e" stroke-width="3.2" stroke-linecap="round" stroke-linejoin="round" />
<path d="M1462 165 L1519 151 L1552 146" fill="none" stroke="#38414e" stroke-width="3.2" stroke-linecap="round" stroke-linejoin="round" />
<path d="M1492 158 L1498 196 L1506 205 L1516 222" fill="none" stroke="#38414e" stroke-width="3.2" stroke-linecap="round" stroke-linejoin="round" />
<path d="M1498 196 L1525 222" fill="none" stroke="#38414e" stroke-width="3.2" stroke-linecap="round" stroke-linejoin="round" />
<path d="M1527 140 L1530 150 L1540 210" fill="none" stroke="#38414e" stroke-width="3.2" stroke-linecap="round" stroke-linejoin="round" />
<path d="M1522 152 L1534 212" fill="none" stroke="#38414e" stroke-width="3.2" stroke-linecap="round" stroke-linejoin="round" />
<path d="M1536 150 L1546 208" fill="none" stroke="#38414e" stroke-width="3.2" stroke-linecap="round" stroke-linejoin="round" />
<path d="M1550 138 L1563 215" fill="none" stroke="#38414e" stroke-width="3.2" stroke-linecap="round" stroke-linejoin="round" />
<path d="M1494 167 L1552 155" fill="none" stroke="#38414e" stroke-width="3.2" stroke-linecap="round" stroke-linejoin="round" />
<path d="M1497 180 L1554 168" fill="none" stroke="#38414e" stroke-width="3.2" stroke-linecap="round" stroke-linejoin="round" />
<path d="M1516 222 Q1530 205 1548 214" fill="none" stroke="#38414e" stroke-width="3.2" stroke-linecap="round" stroke-linejoin="round" />
<path d="M1462 225 L1500 222 L1520 224 L1560 216 L1590 213 L1604 213" fill="none" stroke="#38414e" stroke-width="3.2" stroke-linecap="round" stroke-linejoin="round" />
<path d="M1524 224 Q1512 236 1520 262" fill="none" stroke="#38414e" stroke-width="3.2" stroke-linecap="round" stroke-linejoin="round" />
<path d="M1520 224 Q1495 232 1504 255 Q1508 268 1520 262" fill="none" stroke="#38414e" stroke-width="3.2" stroke-linecap="round" stroke-linejoin="round" />
<path d="M1520 262 L1560 256 L1595 250" fill="none" stroke="#38414e" stroke-width="3.2" stroke-linecap="round" stroke-linejoin="round" />
<path d="M1520 262 L1527 300" fill="none" stroke="#38414e" stroke-width="3.2" stroke-linecap="round" stroke-linejoin="round" />
<path d="M1533 262 L1540 300" fill="none" stroke="#38414e" stroke-width="3.2" stroke-linecap="round" stroke-linejoin="round" />
<path d="M1496 186 Q1494 195 1500 200" fill="none" stroke="#38414e" stroke-width="3.2" stroke-linecap="round" stroke-linejoin="round" />
<path d="M1623 231 L1640 226 L1652 212" fill="none" stroke="#38414e" stroke-width="3.2" stroke-linecap="round" stroke-linejoin="round" />
<path d="M1640 226 L1660 246" fill="none" stroke="#38414e" stroke-width="3.2" stroke-linecap="round" stroke-linejoin="round" />
<path d="M1597 249 Q1625 243 1632 262 L1640 300" fill="none" stroke="#38414e" stroke-width="3.2" stroke-linecap="round" stroke-linejoin="round" />
<path d="M1600 285 L1628 281" fill="none" stroke="#38414e" stroke-width="3.2" stroke-linecap="round" stroke-linejoin="round" />
<path d="M1625 281 L1630 313 L1599 316 L1596 285" fill="none" stroke="#38414e" stroke-width="3.2" stroke-linecap="round" stroke-linejoin="round" />
<path d="M1666 240 Q1690 222 1700 224" fill="none" stroke="#38414e" stroke-width="3.2" stroke-linecap="round" stroke-linejoin="round" />
<path d="M1672 214 L1690 210" fill="none" stroke="#38414e" stroke-width="3.2" stroke-linecap="round" stroke-linejoin="round" />
<path d="M1690 210 L1700 224 L1716 222" fill="none" stroke="#38414e" stroke-width="3.2" stroke-linecap="round" stroke-linejoin="round" />
<path d="M1690 262 Q1682 280 1684 300 L1690 340" fill="none" stroke="#38414e" stroke-width="3.2" stroke-linecap="round" stroke-linejoin="round" />
<path d="M1690 262 L1730 258" fill="none" stroke="#38414e" stroke-width="3.2" stroke-linecap="round" stroke-linejoin="round" />
<path d="M1700 224 L1707 262" fill="none" stroke="#38414e" stroke-width="3.2" stroke-linecap="round" stroke-linejoin="round" />
<path d="M1730 258 L1724 300" fill="none" stroke="#38414e" stroke-width="3.2" stroke-linecap="round" stroke-linejoin="round" />
<path d="M1684 300 L1728 296 L1745 292" fill="none" stroke="#38414e" stroke-width="3.2" stroke-linecap="round" stroke-linejoin="round" />
<path d="M1728 296 L1724 280 L1707 262" fill="none" stroke="#38414e" stroke-width="3.2" stroke-linecap="round" stroke-linejoin="round" />
<path d="M1688 308 L1726 300 L1734 320 L1750 318 L1752 290" fill="none" stroke="#38414e" stroke-width="3.2" stroke-linecap="round" stroke-linejoin="round" />
<path d="M1690 340 L1700 352 L1715 348 L1722 340 L1734 320" fill="none" stroke="#38414e" stroke-width="3.2" stroke-linecap="round" stroke-linejoin="round" />
<path d="M1715 348 L1718 364 L1753 360" fill="none" stroke="#38414e" stroke-width="3.2" stroke-linecap="round" stroke-linejoin="round" />
<path d="M1706 368 L1718 364" fill="none" stroke="#38414e" stroke-width="3.2" stroke-linecap="round" stroke-linejoin="round" />
<path d="M1722 340 L1728 390" fill="none" stroke="#38414e" stroke-width="3.2" stroke-linecap="round" stroke-linejoin="round" />
<path d="M1752 318 L1750 390" fill="none" stroke="#38414e" stroke-width="3.2" stroke-linecap="round" stroke-linejoin="round" />
<path d="M1752 322 Q1765 332 1782 326 Q1790 320 1795 312" fill="none" stroke="#38414e" stroke-width="3.2" stroke-linecap="round" stroke-linejoin="round" />
<path d="M1462 317 L1536 306 L1537 290" fill="none" stroke="#38414e" stroke-width="3.2" stroke-linecap="round" stroke-linejoin="round" />
<path d="M1515 290 L1516 306" fill="none" stroke="#38414e" stroke-width="3.2" stroke-linecap="round" stroke-linejoin="round" />
<path d="M1502 332 L1508 374 L1517 380 L1525 428 L1510 435 L1513 446 L1538 444 L1542 467" fill="none" stroke="#38414e" stroke-width="3.2" stroke-linecap="round" stroke-linejoin="round" />
<path d="M1462 383 L1508 375" fill="none" stroke="#38414e" stroke-width="3.2" stroke-linecap="round" stroke-linejoin="round" />
<path d="M1462 484 L1542 470 L1598 461" fill="none" stroke="#38414e" stroke-width="3.2" stroke-linecap="round" stroke-linejoin="round" />
<path d="M1586 380 L1588 392" fill="none" stroke="#38414e" stroke-width="3.2" stroke-linecap="round" stroke-linejoin="round" />
<path d="M1602 389 L1656 383" fill="none" stroke="#38414e" stroke-width="3.2" stroke-linecap="round" stroke-linejoin="round" />
<path d="M1621 422 L1662 417" fill="none" stroke="#38414e" stroke-width="3.2" stroke-linecap="round" stroke-linejoin="round" />
<path d="M1612 428 L1614 442" fill="none" stroke="#38414e" stroke-width="3.2" stroke-linecap="round" stroke-linejoin="round" />
<path d="M1563 442 L1570 477 L1577 530 L1580 545" fill="none" stroke="#38414e" stroke-width="3.2" stroke-linecap="round" stroke-linejoin="round" />
<path d="M1594 444 L1600 474 L1609 530 L1606 545" fill="none" stroke="#38414e" stroke-width="3.2" stroke-linecap="round" stroke-linejoin="round" />
<path d="M1537 523 L1577 518" fill="none" stroke="#38414e" stroke-width="3.2" stroke-linecap="round" stroke-linejoin="round" />
<path d="M1642 290 L1644 313" fill="none" stroke="#38414e" stroke-width="3.2" stroke-linecap="round" stroke-linejoin="round" />
<path d="M1462 537 L1529 528 L1535 550" fill="none" stroke="#38414e" stroke-width="3.2" stroke-linecap="round" stroke-linejoin="round" />
<path d="M1512 542 L1517 562" fill="none" stroke="#38414e" stroke-width="3.2" stroke-linecap="round" stroke-linejoin="round" />
<path d="M1462 570 L1502 562" fill="none" stroke="#38414e" stroke-width="3.2" stroke-linecap="round" stroke-linejoin="round" />
<path d="M1462 597 L1544 583 L1611 573 L1680 563" fill="none" stroke="#38414e" stroke-width="3.2" stroke-linecap="round" stroke-linejoin="round" />
<path d="M1544 584 L1553 634" fill="none" stroke="#38414e" stroke-width="3.2" stroke-linecap="round" stroke-linejoin="round" />
<path d="M1462 654 L1553 636 L1619 626" fill="none" stroke="#38414e" stroke-width="3.2" stroke-linecap="round" stroke-linejoin="round" />
<path d="M1606 520 L1609 583 Q1612 615 1628 630 Q1640 638 1660 636 L1694 632" fill="none" stroke="#38414e" stroke-width="3.2" stroke-linecap="round" stroke-linejoin="round" />
<path d="M1637 639 L1641 659 L1694 653" fill="none" stroke="#38414e" stroke-width="3.2" stroke-linecap="round" stroke-linejoin="round" />
<path d="M1623 687 L1690 679" fill="none" stroke="#38414e" stroke-width="3.2" stroke-linecap="round" stroke-linejoin="round" />
<path d="M1625 687 L1634 730" fill="none" stroke="#38414e" stroke-width="3.2" stroke-linecap="round" stroke-linejoin="round" />
<path d="M1640 684 L1642 702" fill="none" stroke="#38414e" stroke-width="3.2" stroke-linecap="round" stroke-linejoin="round" />
<path d="M1552 698 L1557 725" fill="none" stroke="#38414e" stroke-width="3.2" stroke-linecap="round" stroke-linejoin="round" />
<path d="M1557 724 L1628 715" fill="none" stroke="#38414e" stroke-width="3.2" stroke-linecap="round" stroke-linejoin="round" />
<path d="M1540 524 L1578 520" fill="none" stroke="#38414e" stroke-width="3.2" stroke-linecap="round" stroke-linejoin="round" />
<path d="M1578 520 L1580 545" fill="none" stroke="#38414e" stroke-width="3.2" stroke-linecap="round" stroke-linejoin="round" />
<path d="M1656 592 Q1652 588 1660 587 L1676 586 Q1682 590 1676 595 L1660 597 Q1654 597 1656 592" fill="none" stroke="#38414e" stroke-width="3.2" stroke-linecap="round" stroke-linejoin="round" />
<path d="M1763 651 L1916 651" fill="none" stroke="#38414e" stroke-width="3.2" stroke-linecap="round" stroke-linejoin="round" />
<path d="M1700 676 L1760 672 L1763 640" fill="none" stroke="#38414e" stroke-width="3.2" stroke-linecap="round" stroke-linejoin="round" />
<path d="M1758 672 L1762 700" fill="none" stroke="#38414e" stroke-width="3.2" stroke-linecap="round" stroke-linejoin="round" />
<path d="M1815 654 L1822 700" fill="none" stroke="#38414e" stroke-width="3.2" stroke-linecap="round" stroke-linejoin="round" />
<path d="M1830 655 L1868 690 L1880 700" fill="none" stroke="#38414e" stroke-width="3.2" stroke-linecap="round" stroke-linejoin="round" />
<path d="M1868 690 L1850 712" fill="none" stroke="#38414e" stroke-width="3.2" stroke-linecap="round" stroke-linejoin="round" />
<path d="M1712 712 L1750 706 L1790 700" fill="none" stroke="#38414e" stroke-width="3.2" stroke-linecap="round" stroke-linejoin="round" />
<path d="M1720 712 L1724 740" fill="none" stroke="#38414e" stroke-width="3.2" stroke-linecap="round" stroke-linejoin="round" />
<path d="M1750 716 L1800 712 L1806 735" fill="none" stroke="#38414e" stroke-width="3.2" stroke-linecap="round" stroke-linejoin="round" />
<path d="M1752 716 L1755 740" fill="none" stroke="#38414e" stroke-width="3.2" stroke-linecap="round" stroke-linejoin="round" />
<path d="M1462 800 L1500 792" fill="none" stroke="#38414e" stroke-width="3.2" stroke-linecap="round" stroke-linejoin="round" />
<path d="M1462 905 L1495 898" fill="none" stroke="#38414e" stroke-width="3.2" stroke-linecap="round" stroke-linejoin="round" />
<path d="M1550 890 L1560 905 L1564 915" fill="none" stroke="#38414e" stroke-width="3.2" stroke-linecap="round" stroke-linejoin="round" />
<path d="M1590 890 L1598 912" fill="none" stroke="#38414e" stroke-width="3.2" stroke-linecap="round" stroke-linejoin="round" />
<path d="M1610 770 L1612 890" fill="none" stroke="#38414e" stroke-width="3.2" stroke-linecap="round" stroke-linejoin="round" />
<path d="M1606 808 L1630 804" fill="none" stroke="#38414e" stroke-width="3.2" stroke-linecap="round" stroke-linejoin="round" />
<path d="M1770 790 L1795 786" fill="none" stroke="#38414e" stroke-width="3.2" stroke-linecap="round" stroke-linejoin="round" />
<path d="M1462 922.5 L1495 916" fill="none" stroke="#38414e" stroke-width="3.2" stroke-linecap="round" stroke-linejoin="round" />
<path d="M1462 934 L1485 930 L1490 966 L1462 970" fill="none" stroke="#38414e" stroke-width="3.2" stroke-linecap="round" stroke-linejoin="round" />
<path d="M1490 966 L1494 984" fill="none" stroke="#38414e" stroke-width="3.2" stroke-linecap="round" stroke-linejoin="round" />
<path d="M1883 915 L1890 940" fill="none" stroke="#38414e" stroke-width="3.2" stroke-linecap="round" stroke-linejoin="round" />
<path d="M1890 890 L1896 912 L1916 908" fill="none" stroke="#38414e" stroke-width="3.2" stroke-linecap="round" stroke-linejoin="round" />
<path d="M1840 890 L1846 911" fill="none" stroke="#38414e" stroke-width="3.2" stroke-linecap="round" stroke-linejoin="round" />
<path d="M1790 895 L1800 911" fill="none" stroke="#38414e" stroke-width="3.2" stroke-linecap="round" stroke-linejoin="round" />
<path d="M1700 990 L1760 980 L1800 985 L1840 975 L1916 990" fill="none" stroke="#38414e" stroke-width="3.2" stroke-linecap="round" stroke-linejoin="round" />
<path d="M1760 980 L1765 999" fill="none" stroke="#38414e" stroke-width="3.2" stroke-linecap="round" stroke-linejoin="round" />
<path d="M1840 975 L1850 999" fill="none" stroke="#38414e" stroke-width="3.2" stroke-linecap="round" stroke-linejoin="round" />
<path d="M1880 978 L1890 999" fill="none" stroke="#38414e" stroke-width="3.2" stroke-linecap="round" stroke-linejoin="round" />
<path d="M1560 985 L1565 999" fill="none" stroke="#38414e" stroke-width="3.2" stroke-linecap="round" stroke-linejoin="round" />
<path d="M1650 985 L1640 999" fill="none" stroke="#38414e" stroke-width="3.2" stroke-linecap="round" stroke-linejoin="round" />
<path d="M1452 152 L1760 58" fill="none" stroke="#38414e" stroke-width="17.6" stroke-linecap="round" stroke-linejoin="round" />
<polygon points="1614,112 1640,106 1641,121 1623,128" fill="#38414e"/>
<path d="M1626 118 L1629 126 L1633 172 L1649.3 208.5 L1657.4 245" fill="none" stroke="#38414e" stroke-width="9" stroke-linecap="round" stroke-linejoin="round" />
<path d="M1637 118.6 L1645.2 157.4 L1657.4 188 L1665.6 212.6 L1664 233" fill="none" stroke="#38414e" stroke-width="7" stroke-linecap="round" stroke-linejoin="round" />
<path d="M1641 172 L1651 172" fill="none" stroke="#38414e" stroke-width="4" stroke-linecap="round" stroke-linejoin="round" />
<path d="M1639 118.6 L1651.3 157.4 L1682 204.4 L1693 206" fill="none" stroke="#38414e" stroke-width="7" stroke-linecap="round" stroke-linejoin="round" />
<path d="M1657 224 L1659.5 245 L1660.5 274 L1661.4 290 L1663.5 330 L1667 380 L1672 420 L1677.3 460 L1684 525 L1690.6 586.6 L1696 650 L1701.4 720 L1707 790 L1712 860 L1716 900" fill="none" stroke="#38414e" stroke-width="15.5" stroke-linecap="round" stroke-linejoin="round" />
<path d="M1682 204.4 L1916 174" fill="none" stroke="#38414e" stroke-width="7" stroke-linecap="round" stroke-linejoin="round" />
<path d="M1664 222 Q1672 214 1700 213 L1722 212 L1916 192" fill="none" stroke="#38414e" stroke-width="7" stroke-linecap="round" stroke-linejoin="round" />
<polygon points="1462,984 1530,980 1600,978 1640,978 1600,1000 1462,1000" fill="#38414e"/>
<path d="M1916 700 L1895 730 L1860 780 L1800 868 L1770 911 L1740 950 L1690 975 L1632 984 L1598 1000" fill="none" stroke="#746855" stroke-width="9" stroke-linecap="round" stroke-linejoin="round" />
<path d="M1916 927 L1883 938 L1800 960 L1740 952" fill="none" stroke="#746855" stroke-width="9" stroke-linecap="round" stroke-linejoin="round" />
</svg>
<svg style="left:0;top:0" width="454" height="932" viewBox="1462 67 454 932" font-family="Liberation Sans,DejaVu Sans,sans-serif">
<text x="1721.6" y="138.7" font-size="15" fill="#6f9b76" text-anchor="start" font-weight="normal" textLength="96.4" lengthAdjust="spacingAndGlyphs" stroke="#242f3e" stroke-width="2.2" paint-order="stroke" stroke-linejoin="round">Orman Garden</text>
<text x="1738.0" y="151.6" font-size="10.5" fill="#6f9b76" text-anchor="start" font-weight="normal" font-family="DejaVu Sans,sans-serif" textLength="63.0" lengthAdjust="spacingAndGlyphs" stroke="#242f3e" stroke-width="2.2" paint-order="stroke" stroke-linejoin="round">حديقة الأورمان</text>
<text x="1689.0" y="226.7" font-size="15.5" fill="#d59563" text-anchor="start" font-weight="normal" textLength="147.4" lengthAdjust="spacingAndGlyphs" stroke="#242f3e" stroke-width="2.2" paint-order="stroke" stroke-linejoin="round">Faculty of Engineering</text>
<text x="1689.0" y="244.6" font-size="15.5" fill="#d59563" text-anchor="start" font-weight="normal" textLength="103.0" lengthAdjust="spacingAndGlyphs" stroke="#242f3e" stroke-width="2.2" paint-order="stroke" stroke-linejoin="round">Cairo University</text>
<text x="1689.0" y="257.9" font-size="10.5" fill="#d59563" text-anchor="start" font-weight="normal" font-family="DejaVu Sans,sans-serif" textLength="111.7" lengthAdjust="spacingAndGlyphs" stroke="#242f3e" stroke-width="2.2" paint-order="stroke" stroke-linejoin="round">كلية الهندسة جامعة القاهرة</text>
<text transform="translate(1760.5 216.4) rotate(-6.60)" x="0" y="4.1" font-size="11.5" fill="#b9c1cd" textLength="60.9" lengthAdjust="spacingAndGlyphs" stroke="#242f3e" stroke-width="2.4" paint-order="stroke" stroke-linejoin="round">Nahdet Masr</text>
<text x="1446.0" y="348.7" font-size="13" fill="#d59563" text-anchor="start" font-weight="normal" font-family="DejaVu Sans,sans-serif" textLength="93.4" lengthAdjust="spacingAndGlyphs" stroke="#242f3e" stroke-width="2.2" paint-order="stroke" stroke-linejoin="round">ملاعب السعيدية</text>
<text x="1534.7" y="395.6" font-size="15.5" fill="#d59563" text-anchor="start" font-weight="normal" textLength="66.1" lengthAdjust="spacingAndGlyphs" stroke="#242f3e" stroke-width="2.2" paint-order="stroke" stroke-linejoin="round">Education</text>
<text x="1485.2" y="413.3" font-size="15.5" fill="#d59563" text-anchor="start" font-weight="normal" textLength="115.6" lengthAdjust="spacingAndGlyphs" stroke="#242f3e" stroke-width="2.2" paint-order="stroke" stroke-linejoin="round">Directorate - Giza</text>
<text x="1542.9" y="427.2" font-size="10.5" fill="#d59563" text-anchor="start" font-weight="normal" font-family="DejaVu Sans,sans-serif" textLength="58.4" lengthAdjust="spacingAndGlyphs" stroke="#242f3e" stroke-width="2.2" paint-order="stroke" stroke-linejoin="round">مديرية التربية</text>
<text x="1534.7" y="440.7" font-size="10.5" fill="#d59563" text-anchor="start" font-weight="normal" font-family="DejaVu Sans,sans-serif" textLength="66.6" lengthAdjust="spacingAndGlyphs" stroke="#242f3e" stroke-width="2.2" paint-order="stroke" stroke-linejoin="round">والتعليم بالجيزة</text>
<text x="1539.4" y="549.2" font-size="15.5" fill="#d59563" text-anchor="start" font-weight="normal" textLength="72.4" lengthAdjust="spacingAndGlyphs" stroke="#242f3e" stroke-width="2.2" paint-order="stroke" stroke-linejoin="round">Agriculture</text>
<text x="1502.0" y="566.7" font-size="15.5" fill="#d59563" text-anchor="start" font-weight="normal" textLength="109.8" lengthAdjust="spacingAndGlyphs" stroke="#242f3e" stroke-width="2.2" paint-order="stroke" stroke-linejoin="round">Research Center</text>
<text x="1523.0" y="579.6" font-size="10.5" fill="#d59563" text-anchor="start" font-weight="normal" font-family="DejaVu Sans,sans-serif" textLength="88.8" lengthAdjust="spacingAndGlyphs" stroke="#242f3e" stroke-width="2.2" paint-order="stroke" stroke-linejoin="round">مركز البحوث الزراعية</text>
<text transform="translate(1482.9 650.7) rotate(-9.67)" x="0" y="4.1" font-size="11.5" fill="#9ca5b3" textLength="76.2" lengthAdjust="spacingAndGlyphs" stroke="#242f3e" stroke-width="2.4" paint-order="stroke" stroke-linejoin="round">Inside Cairo Uni</text>
<text x="1715.0" y="538.5" font-size="15" fill="#6f9b76" text-anchor="start" font-weight="normal" font-family="DejaVu Sans,sans-serif" textLength="137.8" lengthAdjust="spacingAndGlyphs" stroke="#242f3e" stroke-width="2.2" paint-order="stroke" stroke-linejoin="round">حديقة الحيوان في الجيزه</text>
<text x="1715.0" y="554.3" font-size="11.5" fill="#6f9b76" text-anchor="start" font-weight="normal" textLength="23.0" lengthAdjust="spacingAndGlyphs" stroke="#242f3e" stroke-width="2.2" paint-order="stroke" stroke-linejoin="round">Park</text>
<text x="1679.0" y="631.6" font-size="15.5" fill="#d59563" text-anchor="start" font-weight="normal" textLength="81.6" lengthAdjust="spacingAndGlyphs" stroke="#242f3e" stroke-width="2.2" paint-order="stroke" stroke-linejoin="round">3al genena -</text>
<text x="1658.0" y="649.1" font-size="15.5" fill="#d59563" text-anchor="start" font-weight="normal" textLength="105.6" lengthAdjust="spacingAndGlyphs" stroke="#242f3e" stroke-width="2.2" paint-order="stroke" stroke-linejoin="round">St George Hotel</text>
<text x="1692.8" y="662.9" font-size="10.5" fill="#d59563" text-anchor="start" font-weight="normal" font-family="DejaVu Sans,sans-serif" textLength="71.2" lengthAdjust="spacingAndGlyphs" stroke="#242f3e" stroke-width="2.2" paint-order="stroke" stroke-linejoin="round">مطعم سان جورج</text>
<text x="1803.7" y="654.5" font-size="11.5" fill="#9ca5b3" text-anchor="start" font-weight="normal" textLength="83.6" lengthAdjust="spacingAndGlyphs" stroke="#242f3e" stroke-width="2.2" paint-order="stroke" stroke-linejoin="round">Radwan El-Tayeb</text>
<text x="1756.6" y="703.7" font-size="15.5" fill="#d59563" text-anchor="start" font-weight="normal" textLength="141.7" lengthAdjust="spacingAndGlyphs" stroke="#242f3e" stroke-width="2.2" paint-order="stroke" stroke-linejoin="round">Diocese Great Martyr</text>
<text x="1778.5" y="721.3" font-size="15.5" fill="#d59563" text-anchor="start" font-weight="normal" textLength="119.8" lengthAdjust="spacingAndGlyphs" stroke="#242f3e" stroke-width="2.2" paint-order="stroke" stroke-linejoin="round">St. George in Giza</text>
<text x="1803.5" y="734.2" font-size="10.5" fill="#d59563" text-anchor="start" font-weight="normal" font-family="DejaVu Sans,sans-serif" textLength="72.5" lengthAdjust="spacingAndGlyphs" stroke="#242f3e" stroke-width="2.2" paint-order="stroke" stroke-linejoin="round">مطرانية الشهيد العظيم</text>
<text x="1580.0" y="739.1" font-size="15" fill="#6f9b76" text-anchor="start" font-weight="normal" textLength="93.6" lengthAdjust="spacingAndGlyphs" stroke="#242f3e" stroke-width="2.2" paint-order="stroke" stroke-linejoin="round">The water Park</text>
<text x="1604.3" y="757.5" font-size="15" fill="#6f9b76" text-anchor="start" font-weight="normal" textLength="67.7" lengthAdjust="spacingAndGlyphs" stroke="#242f3e" stroke-width="2.2" paint-order="stroke" stroke-linejoin="round">Agriculture</text>
<text x="1575.0" y="770.6" font-size="10.5" fill="#6f9b76" text-anchor="start" font-weight="normal" font-family="DejaVu Sans,sans-serif" textLength="52.0" lengthAdjust="spacingAndGlyphs" stroke="#242f3e" stroke-width="2.2" paint-order="stroke" stroke-linejoin="round">الحديقة المائية</text>
<text x="1690.0" y="800.4" font-size="15.5" fill="#d59563" text-anchor="start" font-weight="normal" textLength="103.7" lengthAdjust="spacingAndGlyphs" stroke="#242f3e" stroke-width="2.2" paint-order="stroke" stroke-linejoin="round">Koshary El Jiza</text>
<text x="1715.0" y="814.5" font-size="10.5" fill="#d59563" text-anchor="start" font-weight="normal" font-family="DejaVu Sans,sans-serif" textLength="78.0" lengthAdjust="spacingAndGlyphs" stroke="#242f3e" stroke-width="2.2" paint-order="stroke" stroke-linejoin="round">كشري الجيزة كوبر ج</text>
<text x="1638.6" y="892.3" font-size="15.5" fill="#d59563" text-anchor="start" font-weight="normal" textLength="92.4" lengthAdjust="spacingAndGlyphs" stroke="#242f3e" stroke-width="2.2" paint-order="stroke" stroke-linejoin="round">Baba Saleh Giza</text>
<text x="1664.0" y="902.7" font-size="10.5" fill="#d59563" text-anchor="start" font-weight="normal" font-family="DejaVu Sans,sans-serif" textLength="67.0" lengthAdjust="spacingAndGlyphs" stroke="#242f3e" stroke-width="2.2" paint-order="stroke" stroke-linejoin="round">بابا صالح الجيزة</text>
<path d="M1703.3 298.1 C1701.3 291.1 1692.3 284.6 1692.3 277.6 A11.0 11.0 0 0 1 1714.3 277.6 C1714.3 284.6 1705.3 291.1 1703.3 298.1 Z" fill="#7d99ab"/><path d="M1696.3 276.0 L1703.3 272.20000000000005 L1710.3 276.0 L1703.3 279.8 Z" fill="#fff"/><path d="M1699.3 279.0 V281.6 Q1703.3 284.6 1707.3 281.6 V279.0 L1703.3 281.40000000000003 Z" fill="#fff"/><path d="M1709.7 276.20000000000005 V281.6" stroke="#fff" stroke-width="1.1"/>
<path d="M1616.9 427.7 C1614.9 420.7 1605.9 414.2 1605.9 407.2 A11.0 11.0 0 0 1 1627.9 407.2 C1627.9 414.2 1618.9 420.7 1616.9 427.7 Z" fill="#7d99ab"/><path d="M1610.9 404.8 L1616.9 400.8 L1622.9 404.8 Z M1610.9 410.8 H1622.9 V412.59999999999997 H1610.9 Z M1612.3000000000002 405.59999999999997 H1614.3000000000002 V410.0 H1612.3000000000002 Z M1615.9 405.59999999999997 H1617.9 V410.0 H1615.9 Z M1619.5 405.59999999999997 H1621.5 V410.0 H1619.5 Z" fill="#fff"/>
<path d="M1660.8 458.1 C1658.8 451.1 1649.8 444.6 1649.8 437.6 A11.0 11.0 0 0 1 1671.8 437.6 C1671.8 444.6 1662.8 451.1 1660.8 458.1 Z" fill="#7d99ab"/><path d="M1653.8 436.0 L1660.8 432.20000000000005 L1667.8 436.0 L1660.8 439.8 Z" fill="#fff"/><path d="M1656.8 439.0 V441.6 Q1660.8 444.6 1664.8 441.6 V439.0 L1660.8 441.40000000000003 Z" fill="#fff"/><path d="M1667.2 436.20000000000005 V441.6" stroke="#fff" stroke-width="1.1"/>
<path d="M1627.6 573.7 C1625.6 566.7 1616.6 560.2 1616.6 553.2 A11.0 11.0 0 0 1 1638.6 553.2 C1638.6 560.2 1629.6 566.7 1627.6 573.7 Z" fill="#7d99ab"/><path d="M1621.6 550.8000000000001 L1627.6 546.8000000000001 L1633.6 550.8000000000001 Z M1621.6 556.8000000000001 H1633.6 V558.6 H1621.6 Z M1623.0 551.6 H1625.0 V556.0 H1623.0 Z M1626.6 551.6 H1628.6 V556.0 H1626.6 Z M1630.1999999999998 551.6 H1632.1999999999998 V556.0 H1630.1999999999998 Z" fill="#fff"/>
<path d="M1914 734.5 C1912.0 727.5 1903.0 721.0 1903.0 714.0 A11.0 11.0 0 0 1 1925.0 714.0 C1925.0 721.0 1916.0 727.5 1914 734.5 Z" fill="#7d99ab"/><path d="M1913 708.0 H1915 V711.0 H1918 V713.0 H1915 V720.0 H1913 V713.0 H1910 V711.0 H1913 Z" fill="#fff"/>
<path d="M1556.2 360.0 C1554.2 353.0 1545.2 346.5 1545.2 339.5 A11.0 11.0 0 0 1 1567.2 339.5 C1567.2 346.5 1558.2 353.0 1556.2 360.0 Z" fill="#34a853"/><circle cx="1556.2" cy="339.5" r="3.6" fill="#fff"/>
<path d="M1699.8 556.2 C1697.8 549.2 1688.8 542.7 1688.8 535.7 A11.0 11.0 0 0 1 1710.8 535.7 C1710.8 542.7 1701.8 549.2 1699.8 556.2 Z" fill="#34a853"/><path d="M1699.8 528.7 L1704.0 534.7 H1701.8 L1705.0 539.3000000000001 H1700.8 V541.9000000000001 H1698.8 V539.3000000000001 H1694.6 L1697.8 534.7 H1695.6 Z" fill="#fff"/>
<path d="M1662.2 718.5 C1660.2 711.5 1651.2 705.0 1651.2 698.0 A11.0 11.0 0 0 1 1673.2 698.0 C1673.2 705.0 1664.2 711.5 1662.2 718.5 Z" fill="#34a853"/><path d="M1662.2 691.0 L1666.4 697.0 H1664.2 L1667.4 701.6 H1663.2 V704.2 H1661.2 V701.6 H1657.0 L1660.2 697.0 H1658.0 Z" fill="#fff"/>
<path d="M1780.4 656.1 C1778.4 649.1 1769.4 642.6 1769.4 635.6 A11.0 11.0 0 0 1 1791.4 635.6 C1791.4 642.6 1782.4 649.1 1780.4 656.1 Z" fill="#f29900"/><path d="M1776.0 629.6 V634.1 A1.8 1.8 0 0 0 1779.6000000000001 634.1 V629.6 M1777.8000000000002 629.6 V641.6" stroke="#fff" stroke-width="1.5" fill="none"/><path d="M1784.4 641.6 V629.6 C1781.8000000000002 630.6 1781.8000000000002 635.6 1782.4 636.6 H1784.4" fill="#fff" stroke="#fff" stroke-width="1"/>
<path d="M1780.9 873.9 C1778.9 866.9 1769.9 860.4 1769.9 853.4 A11.0 11.0 0 0 1 1791.9 853.4 C1791.9 860.4 1782.9 866.9 1780.9 873.9 Z" fill="#f29900"/><path d="M1776.5 847.4 V851.9 A1.8 1.8 0 0 0 1780.1000000000001 851.9 V847.4 M1778.3000000000002 847.4 V859.4" stroke="#fff" stroke-width="1.5" fill="none"/><path d="M1784.9 859.4 V847.4 C1782.3000000000002 848.4 1782.3000000000002 853.4 1782.9 854.4 H1784.9" fill="#fff" stroke="#fff" stroke-width="1"/>
<path d="M1598.5 67 L1602.4 77 L1606.3 67 Z" fill="#7b9eb0"/>
<path d="M1742 888 H1753.5 L1747.7 900 Z" fill="#4285f4"/>
<path d="M1667 977 H1677 L1672 990 Z" fill="#7b9eb0"/>
<rect x="1542.8" y="111.3" width="14" height="14" rx="2.4" fill="#1a73e8"/><path d="M1545.8 113.7 H1553.8 A1 1 0 0 1 1554.8 114.7 V121.5 H1544.8 V114.7 A1 1 0 0 1 1545.8 113.7 Z" fill="#fff"/><rect x="1546.2" y="115.1" width="7.2" height="3" fill="#1a73e8"/><circle cx="1547.0" cy="119.89999999999999" r="1" fill="#1a73e8"/><circle cx="1552.6" cy="119.89999999999999" r="1" fill="#1a73e8"/><rect x="1545.3999999999999" y="121.5" width="2" height="1.6" fill="#fff"/><rect x="1552.2" y="121.5" width="2" height="1.6" fill="#fff"/>
<rect x="1640.9" y="191.6" width="14" height="14" rx="2.4" fill="#1a73e8"/><path d="M1643.9 194.0 H1651.9 A1 1 0 0 1 1652.9 195.0 V201.79999999999998 H1642.9 V195.0 A1 1 0 0 1 1643.9 194.0 Z" fill="#fff"/><rect x="1644.3000000000002" y="195.4" width="7.2" height="3" fill="#1a73e8"/><circle cx="1645.1000000000001" cy="200.2" r="1" fill="#1a73e8"/><circle cx="1650.7" cy="200.2" r="1" fill="#1a73e8"/><rect x="1643.5" y="201.79999999999998" width="2" height="1.6" fill="#fff"/><rect x="1650.3000000000002" y="201.79999999999998" width="2" height="1.6" fill="#fff"/>
<rect x="1649.7" y="224.9" width="14" height="14" rx="2.4" fill="#1a73e8"/><path d="M1652.7 227.3 H1660.7 A1 1 0 0 1 1661.7 228.3 V235.1 H1651.7 V228.3 A1 1 0 0 1 1652.7 227.3 Z" fill="#fff"/><rect x="1653.1000000000001" y="228.70000000000002" width="7.2" height="3" fill="#1a73e8"/><circle cx="1653.9" cy="233.5" r="1" fill="#1a73e8"/><circle cx="1659.5" cy="233.5" r="1" fill="#1a73e8"/><rect x="1652.3" y="235.1" width="2" height="1.6" fill="#fff"/><rect x="1659.1000000000001" y="235.1" width="2" height="1.6" fill="#fff"/>
<rect x="1649" y="252.89999999999998" width="14" height="14" rx="2.4" fill="#1a73e8"/><path d="M1652 255.29999999999998 H1660 A1 1 0 0 1 1661 256.29999999999995 V263.09999999999997 H1651 V256.29999999999995 A1 1 0 0 1 1652 255.29999999999998 Z" fill="#fff"/><rect x="1652.4" y="256.7" width="7.2" height="3" fill="#1a73e8"/><circle cx="1653.2" cy="261.5" r="1" fill="#1a73e8"/><circle cx="1658.8" cy="261.5" r="1" fill="#1a73e8"/><rect x="1651.6" y="263.09999999999997" width="2" height="1.6" fill="#fff"/><rect x="1658.4" y="263.09999999999997" width="2" height="1.6" fill="#fff"/>
<rect x="1646.2" y="302.3" width="14" height="14" rx="2.4" fill="#1a73e8"/><path d="M1649.2 304.7 H1657.2 A1 1 0 0 1 1658.2 305.7 V312.5 H1648.2 V305.7 A1 1 0 0 1 1649.2 304.7 Z" fill="#fff"/><rect x="1649.6000000000001" y="306.1" width="7.2" height="3" fill="#1a73e8"/><circle cx="1650.4" cy="310.90000000000003" r="1" fill="#1a73e8"/><circle cx="1656.0" cy="310.90000000000003" r="1" fill="#1a73e8"/><rect x="1648.8" y="312.5" width="2" height="1.6" fill="#fff"/><rect x="1655.6000000000001" y="312.5" width="2" height="1.6" fill="#fff"/>
<rect x="1664.7" y="300.2" width="14" height="14" rx="2.4" fill="#1a73e8"/><path d="M1667.7 302.59999999999997 H1675.7 A1 1 0 0 1 1676.7 303.59999999999997 V310.4 H1666.7 V303.59999999999997 A1 1 0 0 1 1667.7 302.59999999999997 Z" fill="#fff"/><rect x="1668.1000000000001" y="304.0" width="7.2" height="3" fill="#1a73e8"/><circle cx="1668.9" cy="308.8" r="1" fill="#1a73e8"/><circle cx="1674.5" cy="308.8" r="1" fill="#1a73e8"/><rect x="1667.3" y="310.4" width="2" height="1.6" fill="#fff"/><rect x="1674.1000000000001" y="310.4" width="2" height="1.6" fill="#fff"/>
<rect x="1656" y="376" width="14" height="14" rx="2.4" fill="#1a73e8"/><path d="M1659 378.4 H1667 A1 1 0 0 1 1668 379.4 V386.2 H1658 V379.4 A1 1 0 0 1 1659 378.4 Z" fill="#fff"/><rect x="1659.4" y="379.8" width="7.2" height="3" fill="#1a73e8"/><circle cx="1660.2" cy="384.6" r="1" fill="#1a73e8"/><circle cx="1665.8" cy="384.6" r="1" fill="#1a73e8"/><rect x="1658.6" y="386.2" width="2" height="1.6" fill="#fff"/><rect x="1665.4" y="386.2" width="2" height="1.6" fill="#fff"/>
<rect x="1689.8" y="597.5" width="14" height="14" rx="2.4" fill="#1a73e8"/><path d="M1692.8 599.9 H1700.8 A1 1 0 0 1 1701.8 600.9 V607.7 H1691.8 V600.9 A1 1 0 0 1 1692.8 599.9 Z" fill="#fff"/><rect x="1693.2" y="601.3" width="7.2" height="3" fill="#1a73e8"/><circle cx="1694.0" cy="606.1" r="1" fill="#1a73e8"/><circle cx="1699.6" cy="606.1" r="1" fill="#1a73e8"/><rect x="1692.3999999999999" y="607.7" width="2" height="1.6" fill="#fff"/><rect x="1699.2" y="607.7" width="2" height="1.6" fill="#fff"/>
<rect x="1700.5" y="702.8" width="14" height="14" rx="2.4" fill="#1a73e8"/><path d="M1703.5 705.1999999999999 H1711.5 A1 1 0 0 1 1712.5 706.1999999999999 V713.0 H1702.5 V706.1999999999999 A1 1 0 0 1 1703.5 705.1999999999999 Z" fill="#fff"/><rect x="1703.9" y="706.5999999999999" width="7.2" height="3" fill="#1a73e8"/><circle cx="1704.7" cy="711.4" r="1" fill="#1a73e8"/><circle cx="1710.3" cy="711.4" r="1" fill="#1a73e8"/><rect x="1703.1" y="713.0" width="2" height="1.6" fill="#fff"/><rect x="1709.9" y="713.0" width="2" height="1.6" fill="#fff"/>
<rect x="1601.5" y="977.2" width="14" height="14" rx="2.4" fill="#1a73e8"/><path d="M1604.5 979.6 H1612.5 A1 1 0 0 1 1613.5 980.6 V987.4000000000001 H1603.5 V980.6 A1 1 0 0 1 1604.5 979.6 Z" fill="#fff"/><rect x="1604.9" y="981.0" width="7.2" height="3" fill="#1a73e8"/><circle cx="1605.7" cy="985.8000000000001" r="1" fill="#1a73e8"/><circle cx="1611.3" cy="985.8000000000001" r="1" fill="#1a73e8"/><rect x="1604.1" y="987.4000000000001" width="2" height="1.6" fill="#fff"/><rect x="1610.9" y="987.4000000000001" width="2" height="1.6" fill="#fff"/>
<rect x="1881.9" y="936.5" width="14" height="14" rx="2.4" fill="#1a73e8"/><path d="M1884.9 938.9 H1892.9 A1 1 0 0 1 1893.9 939.9 V946.7 H1883.9 V939.9 A1 1 0 0 1 1884.9 938.9 Z" fill="#fff"/><rect x="1885.3000000000002" y="940.3" width="7.2" height="3" fill="#1a73e8"/><circle cx="1886.1000000000001" cy="945.1" r="1" fill="#1a73e8"/><circle cx="1891.7" cy="945.1" r="1" fill="#1a73e8"/><rect x="1884.5" y="946.7" width="2" height="1.6" fill="#fff"/><rect x="1891.3000000000002" y="946.7" width="2" height="1.6" fill="#fff"/>
<path d="M1689 532.5 C1686 521 1674.5 512 1674.5 500.6 A14.5 14.5 0 0 1 1703.5 500.6 C1703.5 512 1692 521 1689 532.5 Z" fill="#ea4335" stroke="#fff" stroke-width="1.6"/><circle cx="1689" cy="500.4" r="5.2" fill="#7d1712"/>
<text x="1469.5" y="987" font-size="19.5" fill="#1b1f24" stroke="#1b1f24" stroke-width="3.4" stroke-linejoin="round" textLength="60" lengthAdjust="spacingAndGlyphs">Google</text>
<text x="1469.5" y="987" font-size="19.5" fill="#fff" stroke="#fff" stroke-width="0.7" textLength="60" lengthAdjust="spacingAndGlyphs">Google</text>
</svg>
<div class="a" style="left:22px;top:11.200000000000003px;width:45px;height:45.5px;background:#a1a1a1;border-radius:5px"><svg style="left:12px;top:11px" width="20" height="24" viewBox="0 0 20 24"><path d="M15 2 L5 12 L15 22" stroke="#fff" stroke-width="2.6" fill="none"/></svg></div>
<div class="a" style="left:376px;top:11.200000000000003px;width:45px;height:45.5px;background:#a1a1a1;border-radius:5px"><svg style="left:11px;top:12px" width="23" height="21" viewBox="0 0 23 21"><path d="M11.5 0.5 L23 11 H19.5 V20.5 H14 V13.5 H9 V20.5 H3.5 V11 H0 Z" fill="#fff"/></svg></div>
<div class="a" style="left:0px;top:668px;width:143px;height:154px;background:#212121;border-radius:18px"></div>
<div class="a" style="left:166px;top:668px;width:143px;height:154px;background:#212121;border-radius:18px"></div>
<div class="a" style="left:332px;top:668px;width:143px;height:154px;background:#212121;border-radius:18px"></div>
<svg style="left:0;top:0" width="454" height="932" viewBox="1462 67 454 932">
<defs>
<linearGradient id="cop" x1="0" y1="0" x2="0" y2="1"><stop offset="0" stop-color="#b97642"/><stop offset=".45" stop-color="#a06137"/><stop offset="1" stop-color="#6b3c23"/></linearGradient>
<linearGradient id="redg" x1="0" y1="0" x2="0" y2="1"><stop offset="0" stop-color="#ee4a45"/><stop offset=".55" stop-color="#d62a2a"/><stop offset="1" stop-color="#8f1518"/></linearGradient>
<linearGradient id="sage" x1="0" y1="0" x2="0" y2="1"><stop offset="0" stop-color="#95a68d"/><stop offset=".55" stop-color="#7b8d74"/><stop offset="1" stop-color="#55654f"/></linearGradient>
<linearGradient id="glass" x1="0" y1="0" x2="1" y2="0"><stop offset="0" stop-color="#a9adaf"/><stop offset=".55" stop-color="#8e9294"/><stop offset=".56" stop-color="#17191b"/><stop offset="1" stop-color="#2a2d30"/></linearGradient>
<radialGradient id="rim"><stop offset="0" stop-color="#e6e6e6"/><stop offset=".75" stop-color="#b4b4b4"/><stop offset="1" stop-color="#5a5a5a"/></radialGradient>
<radialGradient id="drim"><stop offset="0" stop-color="#3a3c3f"/><stop offset=".8" stop-color="#232527"/><stop offset="1" stop-color="#121212"/></radialGradient>
<filter id="bl" x="-10%" y="-30%" width="120%" height="160%"><feGaussianBlur stdDeviation="1.6"/></filter>
</defs>
<g><path d="M 1463.3 768.3 L 1604.2 765.0 L 1604.6 771.7 L 1576.7 775.0 L 1518.3 778.3 L 1476.7 775.8 L 1465.0 772.5 Z" fill="#0e0e0e" filter="url(#bl)" opacity=".9"/><path d="M 1477.9 750.4 Q 1487.5 747.9 1495.8 748.3 L 1535.0 741.7 L 1585.0 739.6 L 1600.0 739.2 Q 1604.6 742.5 1604.2 750.8 L 1603.5 758.3 L 1596.7 760.4 L 1582.5 761.7 L 1529.2 766.8 L 1496.7 769.0 L 1479.2 769.2 L 1477.9 761.7 Z" fill="url(#cop)" /><path d="M 1463.3 750.8 Q 1464.2 746.7 1466.7 744.3 Q 1485.0 739.2 1505.8 735.4 L 1523.3 727.2 Q 1547.5 724.8 1575.0 726.2 L 1590.0 735.0 L 1600.8 738.8 L 1585.0 739.8 L 1535.0 741.8 L 1495.8 748.5 Q 1487.5 748.0 1477.9 750.7 L 1477.9 769.2 L 1465.0 765.8 Z" fill="#1b1b1d" /><path d="M 1507.9 736.8 L 1524.2 728.3 L 1545.0 727.5 L 1535.0 739.2 Z" fill="#25282c" /><path d="M 1539.2 739.2 L 1548.3 728.8 L 1556.7 728.2 L 1557.1 738.3 Z" fill="#2b2f33" /><path d="M 1561.2 738.2 L 1560.4 728.1 L 1574.6 727.5 L 1586.7 735.4 L 1585.0 737.3 Z" fill="#2b2f33" /><path d="M 1557.5 728.3 L 1560.0 728.2 L 1561.0 738.3 L 1558.3 738.5 Z" fill="#4a4d50" /><path d="M 1470.0 745.0 Q 1486.7 740.0 1505.0 736.8 L 1510.0 737.9 Q 1490.0 741.7 1473.3 747.1 Z" fill="#2e3033" /><path d="M 1479.6 756.7 L 1491.7 754.2 L 1493.3 768.3 L 1480.8 769.2 Z" fill="#7a3323" /><path d="M 1465.4 763.3 L 1473.8 764.2 L 1473.8 767.7 L 1465.4 766.8 Z" fill="#cfd2d6" /><path d="M 1480.8 747.9 L 1495.0 747.1 L 1495.4 748.5 L 1481.7 749.3 Z" fill="#55595d" /><path d="M 1529.2 766.8 L 1582.5 761.7 L 1596.7 760.4 L 1596.7 761.7 L 1582.5 763.2 L 1529.2 768.3 Z" fill="#141414" /><path d="M 1552.5 744.0 L 1559.2 743.7 L 1559.2 744.5 L 1552.5 744.8 Z" fill="#d9c2aa" /><path d="M 1577.9 742.3 L 1583.3 742.1 L 1583.3 743.0 L 1577.9 743.2 Z" fill="#2a2a2a" /><ellipse cx="1515.0" cy="764.2" rx="10.6" ry="11.9" fill="#0d0d0d"/><ellipse cx="1515.0" cy="764.2" rx="7.8" ry="9.0" fill="url(#drim)"/><path d="M1515.0 764.2 L1515.0 755.4" stroke="#46494c" stroke-width="1.3"/><path d="M1515.0 764.2 L1519.5 757.1" stroke="#46494c" stroke-width="1.3"/><path d="M1515.0 764.2 L1522.3 761.5" stroke="#46494c" stroke-width="1.3"/><path d="M1515.0 764.2 L1522.3 766.9" stroke="#46494c" stroke-width="1.3"/><path d="M1515.0 764.2 L1519.5 771.3" stroke="#46494c" stroke-width="1.3"/><path d="M1515.0 764.2 L1515.0 773.0" stroke="#46494c" stroke-width="1.3"/><path d="M1515.0 764.2 L1510.5 771.3" stroke="#46494c" stroke-width="1.3"/><path d="M1515.0 764.2 L1507.7 766.9" stroke="#46494c" stroke-width="1.3"/><path d="M1515.0 764.2 L1507.7 761.5" stroke="#46494c" stroke-width="1.3"/><path d="M1515.0 764.2 L1510.5 757.1" stroke="#46494c" stroke-width="1.3"/>
<ellipse cx="1589.2" cy="758.3" rx="6.6" ry="9.4" fill="#0d0d0d"/><ellipse cx="1589.2" cy="758.3" rx="4.9" ry="7.1" fill="url(#drim)"/><path d="M1589.2 758.3 L1589.2 751.3" stroke="#46494c" stroke-width="1.3"/><path d="M1589.2 758.3 L1592.6 753.4" stroke="#46494c" stroke-width="1.3"/><path d="M1589.2 758.3 L1594.0 758.3" stroke="#46494c" stroke-width="1.3"/><path d="M1589.2 758.3 L1592.6 763.2" stroke="#46494c" stroke-width="1.3"/><path d="M1589.2 758.3 L1589.2 765.3" stroke="#46494c" stroke-width="1.3"/><path d="M1589.2 758.3 L1585.8 763.2" stroke="#46494c" stroke-width="1.3"/><path d="M1589.2 758.3 L1584.4 758.3" stroke="#46494c" stroke-width="1.3"/><path d="M1589.2 758.3 L1585.8 753.4" stroke="#46494c" stroke-width="1.3"/>
</g>
<g><path d="M 1628.3 761.7 L 1770.8 754.2 L 1771.0 761.7 L 1745.0 765.8 L 1695.0 769.2 L 1645.0 768.3 L 1628.3 765.8 Z" fill="#070707" filter="url(#bl)"/><path d="M 1628.3 760.4 Q 1628.8 754.2 1630.8 749.2 Q 1638.3 738.8 1647.5 736.5 Q 1657.5 735.0 1671.7 737.3 L 1695.0 726.0 Q 1708.3 723.8 1720.8 725.2 L 1729.2 727.5 Q 1750.0 730.4 1768.3 732.7 Q 1771.2 735.0 1771.0 740.0 L 1770.8 755.0 L 1766.7 758.3 L 1751.7 757.1 L 1700.0 762.7 L 1677.5 766.0 L 1653.3 765.0 L 1631.7 763.8 Z" fill="url(#redg)" /><path d="M 1674.6 738.2 L 1695.0 726.7 Q 1708.3 724.3 1720.4 725.7 L 1727.9 727.7 L 1721.2 734.3 L 1703.3 736.8 L 1700.0 737.7 Z" fill="#3b4048" /><path d="M 1695.4 727.1 Q 1703.3 725.0 1706.7 728.3 L 1700.0 737.5 L 1678.3 738.5 Z" fill="#555b66" /><path d="M 1706.7 730.2 L 1723.3 727.5 L 1727.5 728.2 L 1720.0 734.7 L 1704.2 736.5 Z" fill="#26292e" /><path d="M 1705.0 732.9 L 1711.7 732.1 L 1712.5 734.6 L 1706.7 735.4 Z" fill="#d42a2a" /><path d="M 1645.0 739.2 Q 1655.0 736.8 1670.0 738.8 L 1680.0 741.7 Q 1663.3 742.5 1650.0 745.8 Z" fill="#f2635c" opacity=".8"/><path d="M 1727.5 729.2 Q 1745.0 730.8 1766.7 733.5 L 1761.7 735.8 Q 1745.0 732.9 1728.3 732.9 Z" fill="#f46a62" opacity=".7"/><path d="M 1657.5 749.6 Q 1666.7 745.0 1679.6 741.8 L 1678.8 743.3 Q 1668.3 747.1 1659.2 750.8 Z" fill="#3a3f46" /><path d="M 1640.8 746.0 L 1647.5 742.9 L 1650.0 744.3 L 1645.0 747.1 Z" fill="#5a1010" /><path d="M 1632.5 755.2 L 1654.2 754.8 L 1659.2 764.2 L 1635.0 763.2 Z" fill="#1c2024" /><path d="M 1628.3 760.4 L 1632.5 760.0 L 1633.3 764.2 L 1629.2 763.8 Z" fill="#b01d1d" /><path d="M 1723.3 739.8 L 1743.3 748.5 L 1735.4 750.4 L 1730.8 745.2 Z" fill="#190909" /><path d="M 1700.0 742.5 Q 1715.8 740.0 1728.3 742.5 L 1735.0 750.4 Q 1720.0 754.2 1701.7 754.2 Z" fill="#b81d20" opacity=".55"/><ellipse cx="1690.0" cy="755.8" rx="10.6" ry="11.6" fill="#0d0d0d"/><ellipse cx="1690.0" cy="755.8" rx="7.8" ry="8.8" fill="url(#rim)"/><path d="M1690.0 755.8 L1690.0 747.2" stroke="#8a8a8a" stroke-width="1.3"/><path d="M1690.0 755.8 L1697.3 753.1" stroke="#8a8a8a" stroke-width="1.3"/><path d="M1690.0 755.8 L1694.5 762.7" stroke="#8a8a8a" stroke-width="1.3"/><path d="M1690.0 755.8 L1685.5 762.7" stroke="#8a8a8a" stroke-width="1.3"/><path d="M1690.0 755.8 L1682.7 753.1" stroke="#8a8a8a" stroke-width="1.3"/><circle cx="1690.0" cy="755.8" r="1.8" fill="#d8d8d8"/>
<path d="M1692.5 750.5 Q1695.5 755.5 1693.5 761.5 L1691.5 760.5 Q1693.5 755.5 1690.8 751.5 Z" fill="#c42020"/><ellipse cx="1760.8" cy="748.3" rx="7.6" ry="10.9" fill="#0d0d0d"/><ellipse cx="1760.8" cy="748.3" rx="5.6" ry="8.3" fill="url(#rim)"/><path d="M1760.8 748.3 L1760.8 740.2" stroke="#8a8a8a" stroke-width="1.3"/><path d="M1760.8 748.3 L1766.0 745.8" stroke="#8a8a8a" stroke-width="1.3"/><path d="M1760.8 748.3 L1764.0 754.8" stroke="#8a8a8a" stroke-width="1.3"/><path d="M1760.8 748.3 L1757.6 754.8" stroke="#8a8a8a" stroke-width="1.3"/><path d="M1760.8 748.3 L1755.6 745.8" stroke="#8a8a8a" stroke-width="1.3"/><circle cx="1760.8" cy="748.3" r="1.3" fill="#d8d8d8"/>
</g>
<g><path d="M 1796.6 778.0 L 1916.6 771.0 L 1916.6 790.3 L 1876.3 793.8 L 1832.5 792.1 L 1801.9 786.8 Z" fill="#0c0c0c" filter="url(#bl)"/><path d="M 1795.8 769.7 Q 1796.2 760.5 1798.8 754.8 Q 1813.3 747.4 1829.0 743.7 L 1878.9 743.7 L 1916.6 740.6 L 1916.6 771.0 L 1880.7 776.3 L 1874.6 781.5 L 1852.7 784.2 L 1828.2 782.9 L 1800.1 779.4 Z" fill="url(#sage)" /><path d="M 1829.0 743.5 L 1852.7 729.7 Q 1867.6 726.2 1885.1 725.9 L 1916.6 728.1 L 1916.6 740.9 L 1878.9 743.9 Z" fill="#17191b" /><path d="M 1832.5 743.2 L 1853.6 730.9 L 1882.5 729.7 L 1875.0 743.2 Z" fill="url(#glass)" /><path d="M 1880.7 741.3 L 1888.6 730.4 L 1899.1 730.9 L 1898.2 740.9 Z" fill="#25282b" /><path d="M 1901.3 732.5 L 1914.0 733.8 L 1915.3 739.3 L 1900.8 740.6 Z" fill="#9b9fa2" /><path d="M 1880.7 741.3 L 1891.2 740.4 L 1892.1 743.0 L 1881.6 743.9 Z" fill="#1d1f21" /><path d="M 1800.1 753.5 Q 1816.8 746.5 1832.5 744.3 L 1878.1 744.3 Q 1858.8 750.0 1836.9 754.0 Z" fill="#8fa088" /><path d="M 1836.9 754.0 Q 1858.8 750.0 1878.1 744.3 L 1878.9 751.8 Q 1863.2 756.2 1851.8 760.5 Z" fill="#64755f" /><path d="M 1797.5 756.6 Q 1815.0 754.4 1836.0 754.6 L 1841.7 767.5 L 1819.4 768.0 L 1797.1 764.5 Z" fill="#121416" /><path d="M 1834.3 758.8 L 1841.7 753.5 L 1849.2 756.2 L 1847.4 757.9 L 1841.7 756.0 L 1836.9 760.5 L 1841.7 766.7 L 1840.4 767.5 Z" fill="#e9eeee" /><path d="M 1841.3 756.2 L 1849.2 756.6 L 1846.5 764.0 L 1843.0 765.8 Z" fill="#1c1f21" /><path d="M 1802.3 766.7 L 1818.1 767.5 L 1818.1 772.6 L 1802.3 771.7 Z" fill="#d9dddb" /><path d="M 1806.3 768.4 L 1814.2 768.9 L 1814.2 771.0 L 1806.3 770.6 Z" fill="#7a7d7b" /><path d="M 1798.8 772.8 L 1836.0 775.4 L 1832.5 779.4 L 1800.1 776.7 Z" fill="#191b1c" /><path d="M 1799.7 778.2 L 1827.7 781.5 L 1827.3 783.1 L 1799.7 779.8 Z" fill="#b9bdbb" /><path d="M 1850.1 781.5 Q 1850.9 764.0 1864.1 762.3 Q 1877.2 762.7 1878.1 776.3 L 1916.6 769.7 L 1916.6 772.8 L 1880.7 778.9 L 1875.4 784.2 L 1852.7 785.1 Z" fill="#151617" /><ellipse cx="1864.0" cy="778.0" rx="10.6" ry="14.0" fill="#0d0d0d"/><ellipse cx="1864.0" cy="778.0" rx="7.8" ry="10.6" fill="url(#drim)"/><path d="M1864.0 778.0 L1864.0 767.6" stroke="#5c6063" stroke-width="1.3"/><path d="M1864.0 778.0 L1868.5 769.6" stroke="#5c6063" stroke-width="1.3"/><path d="M1864.0 778.0 L1871.3 774.8" stroke="#5c6063" stroke-width="1.3"/><path d="M1864.0 778.0 L1871.3 781.2" stroke="#5c6063" stroke-width="1.3"/><path d="M1864.0 778.0 L1868.5 786.4" stroke="#5c6063" stroke-width="1.3"/><path d="M1864.0 778.0 L1864.0 788.4" stroke="#5c6063" stroke-width="1.3"/><path d="M1864.0 778.0 L1859.5 786.4" stroke="#5c6063" stroke-width="1.3"/><path d="M1864.0 778.0 L1856.7 781.2" stroke="#5c6063" stroke-width="1.3"/><path d="M1864.0 778.0 L1856.7 774.8" stroke="#5c6063" stroke-width="1.3"/><path d="M1864.0 778.0 L1859.5 769.6" stroke="#5c6063" stroke-width="1.3"/>
</g>
</svg>
<svg style="left:0;top:0" width="454" height="932" viewBox="1462 67 454 932" font-family="Liberation Sans,sans-serif"><text x="1503.9" y="836.6" font-size="20.2" fill="#fff" stroke="#fff" stroke-width="0.5" textLength="60.0" lengthAdjust="spacingAndGlyphs">Luxury</text><text x="1672" y="836.6" font-size="20.2" fill="#fff" stroke="#fff" stroke-width="0.5" textLength="54.7" lengthAdjust="spacingAndGlyphs">Exotic</text><text x="1836" y="836.6" font-size="20.2" fill="#fff" stroke="#fff" stroke-width="0.5" textLength="58.3" lengthAdjust="spacingAndGlyphs">Family</text></svg>
<div class="a" style="left:33px;top:844px;width:388px;height:66px;background:#3b5fec;border-radius:7px"><svg style="left:0;top:0" width="388" height="66" viewBox="0 0 388 66" font-family="Liberation Sans,sans-serif"><text x="102" y="41" font-size="23" fill="#fff" stroke="#fff" stroke-width="0.8" textLength="183.6" lengthAdjust="spacingAndGlyphs">Confirm location</text></svg></div>
</div>
<div class="a" style="left:1462px;top:999px;width:454px;height:26.5px;background:#000000;"></div>
<div class="a" style="left:1629.5px;top:1010.5px;width:119px;height:4.5px;background:#e3e3e3;border-radius:2.5px"></div>
</body></html>
